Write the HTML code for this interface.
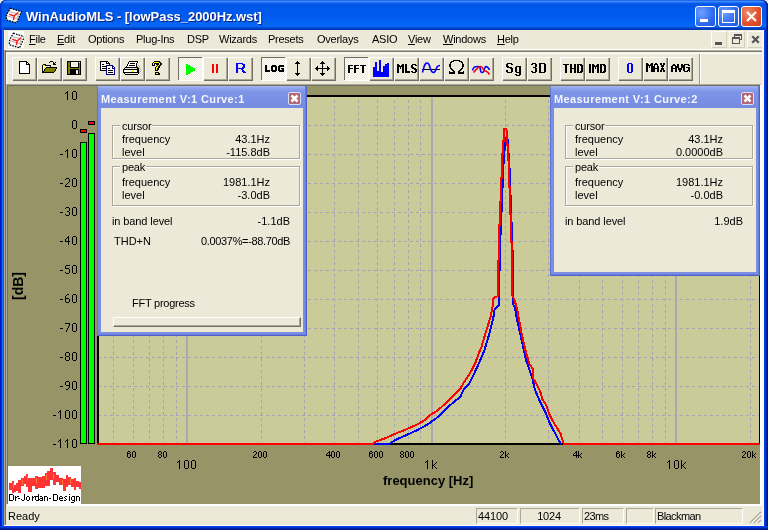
<!DOCTYPE html><html><head><meta charset="utf-8"><style>
*{box-sizing:border-box}
body{margin:0;width:768px;height:530px;overflow:hidden;position:relative;background:#F2ECD6;font-family:"Liberation Sans",sans-serif;font-size:11px;color:#000}
.a{position:absolute}
.t{position:absolute;white-space:nowrap;line-height:1;will-change:transform}
.btn{position:absolute;top:57px;width:24px;height:23px;background:#ECE9D8;border-top:1px solid #fff;border-left:1px solid #fff;box-shadow:inset -1px -1px 0 #ACA899, 1px 1px 0 #716F64}
.btn.p{background-color:#ECE9D8;background-image:linear-gradient(45deg,#fff 25%,transparent 25%,transparent 75%,#fff 75%),linear-gradient(45deg,#fff 25%,transparent 25%,transparent 75%,#fff 75%);background-size:2px 2px;background-position:0 0,1px 1px;border-top:1px solid #716F64;border-left:1px solid #716F64;box-shadow:1px 1px 0 #fff}
</style></head><body>
<div class="a" style="left:0;top:0;width:768px;height:30px;border-radius:6px 6px 0 0;box-shadow:inset 1px 0 0 #0030D0,inset -1px 0 0 #001A90,inset 2px 0 0 #0848E0,inset -2px 0 0 #0030C0;background:linear-gradient(#0845D0 0px,#3D8EFF 1px,#3888FF 2px,#0C5EF0 3px,#0054E6 5px,#0058EC 8px,#005AEE 16px,#0060F2 21px,#0868F8 25px,#0562F2 27px,#0042C4 28px,#0036B0 30px)"></div>
<div class="a" style="left:0;top:29px;width:4px;height:501px;background:linear-gradient(90deg,#0019CF 0px,#0019CF 1px,#0828D8 1px,#0828D8 2px,#1A6FF2 2px,#1A6FF2 3px,#0B5CEA 3px)"></div>
<div class="a" style="left:764px;top:29px;width:4px;height:501px;background:linear-gradient(90deg,#0042EE 0px,#0042EE 1px,#0032D4 1px,#0032D4 2px,#00229E 2px,#00229E 3px,#001888 3px)"></div>
<div class="a" style="left:0;top:526px;width:768px;height:4px;background:linear-gradient(#0042EE 0px,#0042EE 1px,#0032D4 1px,#0032D4 2px,#00229E 2px,#00229E 3px,#001888 3px)"></div>
<div class="a" style="left:4px;top:30px;width:760px;height:496px;background:#ECE9D8"></div>
<svg class="a" style="left:4px;top:5px" width="20" height="20" viewBox="0 0 20 20"><path d="M6.4 3.2 L17.4 6.8 L12.5 17.9 L2.3 14.7 L2.6 9.8 Z" fill="#fff" stroke="#000" stroke-width="1.3" stroke-dasharray="1.6 1.1"/><path d="M5 6.5 L14.5 9 M3.5 11 L12.5 13.5 M14.5 9 L12.5 13.5" stroke="#9A9A9A" stroke-width="0.8" fill="none"/><path d="M5.3 9.2 L10.2 10.9 L14.3 7.5 M10.2 10.9 L9.4 15.2" stroke="#FF2020" stroke-width="1.5" fill="none"/></svg>
<div class="t" style="left:26px;top:10px;font-weight:bold;font-size:13px;letter-spacing:-0.05px;color:#fff;text-shadow:1px 1px 0 #0A1E80">WinAudioMLS - [lowPass_2000Hz.wst]</div>
<div class="a" style="left:695px;top:6px;width:21px;height:21px;border-radius:3px;border:1px solid #fff;background:radial-gradient(circle at 30% 30%,#6FA0FF,#2F6BF0 60%,#1E55DA)"><div class="a" style="left:4px;top:12px;width:8px;height:3px;background:#fff"></div></div>
<div class="a" style="left:718px;top:6px;width:21px;height:21px;border-radius:3px;border:1px solid #fff;background:radial-gradient(circle at 30% 30%,#6FA0FF,#2F6BF0 60%,#1E55DA)"><div class="a" style="left:3px;top:3px;width:13px;height:13px;border:1px solid #fff;border-top-width:3px"></div></div>
<div class="a" style="left:741px;top:6px;width:21px;height:21px;border-radius:3px;border:1px solid #fff;background:radial-gradient(circle at 30% 30%,#F08A6A,#E0502A 60%,#C8401E)"><svg class="a" style="left:3px;top:3px" width="13" height="13"><path d="M2 2 L11 11 M11 2 L2 11" stroke="#fff" stroke-width="2.2"/></svg></div>
<svg class="a" style="left:8px;top:31px" width="16" height="17" viewBox="0 0 16 17"><rect width="16" height="17" fill="#fff"/><g transform="translate(-1,-1)"><path d="M6.4 3.2 L17.4 6.8 L12.5 17.9 L2.3 14.7 L2.6 9.8 Z" fill="#fff" stroke="#000" stroke-width="1.3" stroke-dasharray="1.6 1.1"/><path d="M5 6.5 L14.5 9 M3.5 11 L12.5 13.5 M14.5 9 L12.5 13.5" stroke="#9A9A9A" stroke-width="0.8" fill="none"/><path d="M5.3 9.2 L10.2 10.9 L14.3 7.5 M10.2 10.9 L9.4 15.2" stroke="#FF2020" stroke-width="1.5" fill="none"/></g></svg>
<div class="t" style="left:29px;top:34px;font-size:11px;letter-spacing:-0.25px"><u>F</u>ile</div>
<div class="t" style="left:57px;top:34px;font-size:11px;letter-spacing:-0.25px"><u>E</u>dit</div>
<div class="t" style="left:88px;top:34px;font-size:11px;letter-spacing:-0.25px">Options</div>
<div class="t" style="left:136px;top:34px;font-size:11px;letter-spacing:-0.25px">Plug-Ins</div>
<div class="t" style="left:187px;top:34px;font-size:11px;letter-spacing:-0.25px">DSP</div>
<div class="t" style="left:219px;top:34px;font-size:11px;letter-spacing:-0.25px">Wizards</div>
<div class="t" style="left:268px;top:34px;font-size:11px;letter-spacing:-0.25px">Presets</div>
<div class="t" style="left:317px;top:34px;font-size:11px;letter-spacing:-0.25px">Overlays</div>
<div class="t" style="left:372px;top:34px;font-size:11px;letter-spacing:-0.25px">ASIO</div>
<div class="t" style="left:408px;top:34px;font-size:11px;letter-spacing:-0.25px"><u>V</u>iew</div>
<div class="t" style="left:443px;top:34px;font-size:11px;letter-spacing:-0.25px"><u>W</u>indows</div>
<div class="t" style="left:497px;top:34px;font-size:11px;letter-spacing:-0.25px"><u>H</u>elp</div>
<div class="a" style="left:711px;top:31px;width:16px;height:17px;border-top:1px solid #fff;border-left:1px solid #fff;border-right:1px solid #D4D0BE;border-bottom:1px solid #D4D0BE;background:#EEEBDD"><div class="a" style="left:3px;top:10px;width:7px;height:3px;background:#555"></div></div>
<div class="a" style="left:729px;top:31px;width:16px;height:17px;border-top:1px solid #fff;border-left:1px solid #fff;border-right:1px solid #D4D0BE;border-bottom:1px solid #D4D0BE;background:#EEEBDD"></div>
<svg class="a" style="left:732px;top:34px" width="10" height="10" shape-rendering="crispEdges"><rect x="2" y="0" width="8" height="1" fill="#555"/><rect x="2" y="1" width="8" height="1" fill="#555"/><rect x="2" y="2" width="1" height="1" fill="#555"/><rect x="9" y="2" width="1" height="1" fill="#555"/><rect x="0" y="3" width="8" height="1" fill="#555"/><rect x="9" y="3" width="1" height="1" fill="#555"/><rect x="0" y="4" width="8" height="1" fill="#555"/><rect x="9" y="4" width="1" height="1" fill="#555"/><rect x="0" y="5" width="1" height="1" fill="#555"/><rect x="7" y="5" width="3" height="1" fill="#555"/><rect x="0" y="6" width="1" height="1" fill="#555"/><rect x="7" y="6" width="1" height="1" fill="#555"/><rect x="0" y="7" width="1" height="1" fill="#555"/><rect x="7" y="7" width="1" height="1" fill="#555"/><rect x="0" y="8" width="1" height="1" fill="#555"/><rect x="7" y="8" width="1" height="1" fill="#555"/><rect x="0" y="9" width="8" height="1" fill="#555"/></svg>
<div class="a" style="left:747px;top:31px;width:16px;height:17px;border-top:1px solid #fff;border-left:1px solid #fff;border-right:1px solid #D4D0BE;border-bottom:1px solid #D4D0BE;background:#EEEBDD"><svg class="a" style="left:3px;top:3px" width="9" height="10"><path d="M1.2 1.2 L7.8 7.8 M7.8 1.2 L1.2 7.8" stroke="#555" stroke-width="2.2"/></svg></div>
<div class="a" style="left:4px;top:49px;width:760px;height:1px;background:#FFFFFF"></div>
<div class="a" style="left:4px;top:50px;width:760px;height:1px;background:#B4B09E"></div>
<div class="a" style="left:4px;top:51px;width:760px;height:1px;background:#807E70"></div>
<div class="a" style="left:4px;top:52px;width:760px;height:1px;background:#F2F0E6"></div>
<div class="a" style="left:4px;top:53px;width:760px;height:1px;background:#FFFFFF"></div>
<div class="a" style="left:6px;top:53px;width:1px;height:31px;background:#fff"></div>
<div class="a" style="left:699px;top:54px;width:1px;height:30px;background:#9C9888"></div>
<div class="a" style="left:700px;top:54px;width:1px;height:30px;background:#fff"></div>
<div class="btn " style="left:12px"></div>
<div class="btn " style="left:37px"></div>
<div class="btn " style="left:62px"></div>
<div class="btn " style="left:95px"></div>
<div class="btn " style="left:120px"></div>
<div class="btn " style="left:145px"></div>
<div class="btn p" style="left:178px"></div>
<div class="btn " style="left:203px"></div>
<div class="btn " style="left:228px"></div>
<div class="btn p" style="left:261px"></div>
<div class="btn " style="left:286px"></div>
<div class="btn " style="left:311px"></div>
<div class="btn p" style="left:344px"></div>
<div class="btn " style="left:369px"></div>
<div class="btn " style="left:394px"></div>
<div class="btn " style="left:419px"></div>
<div class="btn " style="left:444px"></div>
<div class="btn " style="left:469px"></div>
<div class="btn " style="left:502px"></div>
<div class="btn " style="left:527px"></div>
<div class="btn " style="left:560px"></div>
<div class="btn " style="left:585px"></div>
<div class="btn " style="left:618px"></div>
<div class="btn " style="left:643px"></div>
<div class="btn " style="left:668px"></div>
<svg class="a" style="left:19px;top:61px" width="11" height="13" shape-rendering="crispEdges"><rect x="0" y="0" width="8" height="1" fill="#000"/><rect x="0" y="1" width="1" height="1" fill="#000"/><rect x="1" y="1" width="6" height="1" fill="#fff"/><rect x="7" y="1" width="2" height="1" fill="#000"/><rect x="0" y="2" width="1" height="1" fill="#000"/><rect x="1" y="2" width="6" height="1" fill="#fff"/><rect x="7" y="2" width="1" height="1" fill="#000"/><rect x="8" y="2" width="1" height="1" fill="#fff"/><rect x="9" y="2" width="1" height="1" fill="#000"/><rect x="0" y="3" width="1" height="1" fill="#000"/><rect x="1" y="3" width="6" height="1" fill="#fff"/><rect x="7" y="3" width="4" height="1" fill="#000"/><rect x="0" y="4" width="1" height="1" fill="#000"/><rect x="1" y="4" width="9" height="1" fill="#fff"/><rect x="10" y="4" width="1" height="1" fill="#000"/><rect x="0" y="5" width="1" height="1" fill="#000"/><rect x="1" y="5" width="9" height="1" fill="#fff"/><rect x="10" y="5" width="1" height="1" fill="#000"/><rect x="0" y="6" width="1" height="1" fill="#000"/><rect x="1" y="6" width="9" height="1" fill="#fff"/><rect x="10" y="6" width="1" height="1" fill="#000"/><rect x="0" y="7" width="1" height="1" fill="#000"/><rect x="1" y="7" width="9" height="1" fill="#fff"/><rect x="10" y="7" width="1" height="1" fill="#000"/><rect x="0" y="8" width="1" height="1" fill="#000"/><rect x="1" y="8" width="9" height="1" fill="#fff"/><rect x="10" y="8" width="1" height="1" fill="#000"/><rect x="0" y="9" width="1" height="1" fill="#000"/><rect x="1" y="9" width="9" height="1" fill="#fff"/><rect x="10" y="9" width="1" height="1" fill="#000"/><rect x="0" y="10" width="1" height="1" fill="#000"/><rect x="1" y="10" width="9" height="1" fill="#fff"/><rect x="10" y="10" width="1" height="1" fill="#000"/><rect x="0" y="11" width="1" height="1" fill="#000"/><rect x="1" y="11" width="9" height="1" fill="#fff"/><rect x="10" y="11" width="1" height="1" fill="#000"/><rect x="0" y="12" width="11" height="1" fill="#000"/></svg>
<svg class="a" style="left:42px;top:60px" width="15" height="13" shape-rendering="crispEdges"><rect x="8" y="1" width="3" height="1" fill="#000"/><rect x="7" y="2" width="1" height="1" fill="#000"/><rect x="11" y="2" width="1" height="1" fill="#000"/><rect x="13" y="2" width="1" height="1" fill="#000"/><rect x="11" y="3" width="2" height="1" fill="#000"/><rect x="1" y="4" width="3" height="1" fill="#000"/><rect x="11" y="4" width="3" height="1" fill="#000"/><rect x="0" y="5" width="1" height="1" fill="#000"/><rect x="1" y="5" width="1" height="1" fill="#fff"/><rect x="2" y="5" width="1" height="1" fill="#FFFF00"/><rect x="3" y="5" width="6" height="1" fill="#000"/><rect x="0" y="6" width="1" height="1" fill="#000"/><rect x="1" y="6" width="1" height="1" fill="#FFFF00"/><rect x="2" y="6" width="1" height="1" fill="#fff"/><rect x="3" y="6" width="1" height="1" fill="#FFFF00"/><rect x="4" y="6" width="1" height="1" fill="#fff"/><rect x="5" y="6" width="1" height="1" fill="#FFFF00"/><rect x="6" y="6" width="1" height="1" fill="#fff"/><rect x="7" y="6" width="1" height="1" fill="#FFFF00"/><rect x="8" y="6" width="1" height="1" fill="#000"/><rect x="0" y="7" width="1" height="1" fill="#000"/><rect x="1" y="7" width="1" height="1" fill="#fff"/><rect x="2" y="7" width="1" height="1" fill="#FFFF00"/><rect x="3" y="7" width="1" height="1" fill="#fff"/><rect x="4" y="7" width="11" height="1" fill="#000"/><rect x="0" y="8" width="1" height="1" fill="#000"/><rect x="1" y="8" width="1" height="1" fill="#FFFF00"/><rect x="2" y="8" width="1" height="1" fill="#fff"/><rect x="3" y="8" width="1" height="1" fill="#000"/><rect x="4" y="8" width="10" height="1" fill="#808000"/><rect x="14" y="8" width="1" height="1" fill="#000"/><rect x="0" y="9" width="1" height="1" fill="#000"/><rect x="1" y="9" width="1" height="1" fill="#fff"/><rect x="2" y="9" width="1" height="1" fill="#000"/><rect x="3" y="9" width="10" height="1" fill="#808000"/><rect x="13" y="9" width="1" height="1" fill="#000"/><rect x="0" y="10" width="1" height="1" fill="#000"/><rect x="1" y="10" width="1" height="1" fill="#FFFF00"/><rect x="2" y="10" width="1" height="1" fill="#000"/><rect x="3" y="10" width="10" height="1" fill="#808000"/><rect x="13" y="10" width="1" height="1" fill="#000"/><rect x="0" y="11" width="2" height="1" fill="#000"/><rect x="2" y="11" width="10" height="1" fill="#808000"/><rect x="12" y="11" width="1" height="1" fill="#000"/><rect x="0" y="12" width="12" height="1" fill="#000"/></svg>
<svg class="a" style="left:67px;top:61px" width="14" height="14" shape-rendering="crispEdges"><rect x="0" y="0" width="14" height="1" fill="#000"/><rect x="0" y="1" width="1" height="1" fill="#000"/><rect x="1" y="1" width="2" height="1" fill="#808000"/><rect x="3" y="1" width="1" height="1" fill="#000"/><rect x="4" y="1" width="7" height="1" fill="#fff"/><rect x="11" y="1" width="1" height="1" fill="#000"/><rect x="12" y="1" width="1" height="1" fill="#fff"/><rect x="13" y="1" width="1" height="1" fill="#000"/><rect x="0" y="2" width="1" height="1" fill="#000"/><rect x="1" y="2" width="2" height="1" fill="#808000"/><rect x="3" y="2" width="1" height="1" fill="#000"/><rect x="4" y="2" width="1" height="1" fill="#fff"/><rect x="5" y="2" width="5" height="1" fill="#ECE9D8"/><rect x="10" y="2" width="1" height="1" fill="#fff"/><rect x="11" y="2" width="1" height="1" fill="#000"/><rect x="12" y="2" width="1" height="1" fill="#808000"/><rect x="13" y="2" width="1" height="1" fill="#000"/><rect x="0" y="3" width="1" height="1" fill="#000"/><rect x="1" y="3" width="2" height="1" fill="#808000"/><rect x="3" y="3" width="1" height="1" fill="#000"/><rect x="4" y="3" width="1" height="1" fill="#fff"/><rect x="5" y="3" width="5" height="1" fill="#ECE9D8"/><rect x="10" y="3" width="1" height="1" fill="#fff"/><rect x="11" y="3" width="1" height="1" fill="#000"/><rect x="12" y="3" width="1" height="1" fill="#808000"/><rect x="13" y="3" width="1" height="1" fill="#000"/><rect x="0" y="4" width="1" height="1" fill="#000"/><rect x="1" y="4" width="2" height="1" fill="#808000"/><rect x="3" y="4" width="1" height="1" fill="#000"/><rect x="4" y="4" width="1" height="1" fill="#fff"/><rect x="5" y="4" width="5" height="1" fill="#ECE9D8"/><rect x="10" y="4" width="1" height="1" fill="#fff"/><rect x="11" y="4" width="1" height="1" fill="#000"/><rect x="12" y="4" width="1" height="1" fill="#808000"/><rect x="13" y="4" width="1" height="1" fill="#000"/><rect x="0" y="5" width="1" height="1" fill="#000"/><rect x="1" y="5" width="2" height="1" fill="#808000"/><rect x="3" y="5" width="1" height="1" fill="#000"/><rect x="4" y="5" width="7" height="1" fill="#fff"/><rect x="11" y="5" width="1" height="1" fill="#000"/><rect x="12" y="5" width="1" height="1" fill="#808000"/><rect x="13" y="5" width="1" height="1" fill="#000"/><rect x="0" y="6" width="1" height="1" fill="#000"/><rect x="1" y="6" width="2" height="1" fill="#808000"/><rect x="3" y="6" width="9" height="1" fill="#000"/><rect x="12" y="6" width="1" height="1" fill="#808000"/><rect x="13" y="6" width="1" height="1" fill="#000"/><rect x="0" y="7" width="1" height="1" fill="#000"/><rect x="1" y="7" width="12" height="1" fill="#808000"/><rect x="13" y="7" width="1" height="1" fill="#000"/><rect x="0" y="8" width="1" height="1" fill="#000"/><rect x="1" y="8" width="2" height="1" fill="#808000"/><rect x="3" y="8" width="9" height="1" fill="#000"/><rect x="12" y="8" width="1" height="1" fill="#808000"/><rect x="13" y="8" width="1" height="1" fill="#000"/><rect x="0" y="9" width="1" height="1" fill="#000"/><rect x="1" y="9" width="2" height="1" fill="#808000"/><rect x="3" y="9" width="6" height="1" fill="#000"/><rect x="9" y="9" width="2" height="1" fill="#ECE9D8"/><rect x="11" y="9" width="1" height="1" fill="#000"/><rect x="12" y="9" width="1" height="1" fill="#808000"/><rect x="13" y="9" width="1" height="1" fill="#000"/><rect x="0" y="10" width="1" height="1" fill="#000"/><rect x="1" y="10" width="2" height="1" fill="#808000"/><rect x="3" y="10" width="6" height="1" fill="#000"/><rect x="9" y="10" width="2" height="1" fill="#ECE9D8"/><rect x="11" y="10" width="1" height="1" fill="#000"/><rect x="12" y="10" width="1" height="1" fill="#808000"/><rect x="13" y="10" width="1" height="1" fill="#000"/><rect x="0" y="11" width="1" height="1" fill="#000"/><rect x="1" y="11" width="2" height="1" fill="#808000"/><rect x="3" y="11" width="6" height="1" fill="#000"/><rect x="9" y="11" width="2" height="1" fill="#ECE9D8"/><rect x="11" y="11" width="1" height="1" fill="#000"/><rect x="12" y="11" width="1" height="1" fill="#808000"/><rect x="13" y="11" width="1" height="1" fill="#000"/><rect x="0" y="12" width="1" height="1" fill="#000"/><rect x="1" y="12" width="2" height="1" fill="#808000"/><rect x="3" y="12" width="6" height="1" fill="#000"/><rect x="9" y="12" width="2" height="1" fill="#ECE9D8"/><rect x="11" y="12" width="1" height="1" fill="#000"/><rect x="12" y="12" width="1" height="1" fill="#808000"/><rect x="13" y="12" width="1" height="1" fill="#000"/><rect x="0" y="13" width="14" height="1" fill="#000"/></svg>
<svg class="a" style="left:100px;top:61px" width="15" height="14" shape-rendering="crispEdges"><rect x="0" y="0" width="8" height="1" fill="#000"/><rect x="0" y="1" width="1" height="1" fill="#000"/><rect x="1" y="1" width="5" height="1" fill="#fff"/><rect x="6" y="1" width="1" height="1" fill="#000"/><rect x="7" y="1" width="1" height="1" fill="#fff"/><rect x="8" y="1" width="1" height="1" fill="#000"/><rect x="0" y="2" width="1" height="1" fill="#000"/><rect x="1" y="2" width="5" height="1" fill="#fff"/><rect x="6" y="2" width="4" height="1" fill="#000"/><rect x="0" y="3" width="1" height="1" fill="#000"/><rect x="1" y="3" width="1" height="1" fill="#fff"/><rect x="2" y="3" width="2" height="1" fill="#000"/><rect x="4" y="3" width="5" height="1" fill="#fff"/><rect x="9" y="3" width="1" height="1" fill="#000"/><rect x="0" y="4" width="1" height="1" fill="#000"/><rect x="1" y="4" width="5" height="1" fill="#fff"/><rect x="6" y="4" width="7" height="1" fill="#000080"/><rect x="0" y="5" width="1" height="1" fill="#000"/><rect x="1" y="5" width="1" height="1" fill="#fff"/><rect x="2" y="5" width="5" height="1" fill="#000"/><rect x="7" y="5" width="5" height="1" fill="#fff"/><rect x="12" y="5" width="2" height="1" fill="#000080"/><rect x="0" y="6" width="1" height="1" fill="#000"/><rect x="1" y="6" width="5" height="1" fill="#fff"/><rect x="6" y="6" width="1" height="1" fill="#000080"/><rect x="7" y="6" width="5" height="1" fill="#fff"/><rect x="12" y="6" width="1" height="1" fill="#000080"/><rect x="13" y="6" width="1" height="1" fill="#fff"/><rect x="14" y="6" width="1" height="1" fill="#000080"/><rect x="0" y="7" width="1" height="1" fill="#000"/><rect x="1" y="7" width="1" height="1" fill="#fff"/><rect x="2" y="7" width="5" height="1" fill="#000"/><rect x="7" y="7" width="1" height="1" fill="#fff"/><rect x="8" y="7" width="2" height="1" fill="#000"/><rect x="10" y="7" width="2" height="1" fill="#fff"/><rect x="12" y="7" width="3" height="1" fill="#000080"/><rect x="0" y="8" width="1" height="1" fill="#000"/><rect x="1" y="8" width="5" height="1" fill="#fff"/><rect x="6" y="8" width="1" height="1" fill="#000080"/><rect x="7" y="8" width="7" height="1" fill="#fff"/><rect x="14" y="8" width="1" height="1" fill="#000080"/><rect x="0" y="9" width="6" height="1" fill="#000"/><rect x="6" y="9" width="1" height="1" fill="#000080"/><rect x="7" y="9" width="1" height="1" fill="#fff"/><rect x="8" y="9" width="5" height="1" fill="#000"/><rect x="13" y="9" width="1" height="1" fill="#fff"/><rect x="14" y="9" width="1" height="1" fill="#000080"/><rect x="6" y="10" width="1" height="1" fill="#000080"/><rect x="7" y="10" width="7" height="1" fill="#fff"/><rect x="14" y="10" width="1" height="1" fill="#000080"/><rect x="6" y="11" width="1" height="1" fill="#000080"/><rect x="7" y="11" width="1" height="1" fill="#fff"/><rect x="8" y="11" width="5" height="1" fill="#000"/><rect x="13" y="11" width="1" height="1" fill="#fff"/><rect x="14" y="11" width="1" height="1" fill="#000080"/><rect x="6" y="12" width="1" height="1" fill="#000080"/><rect x="7" y="12" width="7" height="1" fill="#fff"/><rect x="14" y="12" width="1" height="1" fill="#000080"/><rect x="6" y="13" width="9" height="1" fill="#000080"/></svg>
<svg class="a" style="left:123px;top:61px" width="18" height="14" shape-rendering="crispEdges"><rect x="6" y="0" width="9" height="1" fill="#000"/><rect x="5" y="1" width="1" height="1" fill="#000"/><rect x="6" y="1" width="8" height="1" fill="#fff"/><rect x="14" y="1" width="1" height="1" fill="#000"/><rect x="5" y="2" width="1" height="1" fill="#000"/><rect x="6" y="2" width="1" height="1" fill="#fff"/><rect x="7" y="2" width="5" height="1" fill="#000"/><rect x="12" y="2" width="1" height="1" fill="#fff"/><rect x="13" y="2" width="1" height="1" fill="#000"/><rect x="4" y="3" width="1" height="1" fill="#000"/><rect x="5" y="3" width="8" height="1" fill="#fff"/><rect x="13" y="3" width="1" height="1" fill="#000"/><rect x="4" y="4" width="1" height="1" fill="#000"/><rect x="5" y="4" width="1" height="1" fill="#fff"/><rect x="6" y="4" width="6" height="1" fill="#000"/><rect x="12" y="4" width="1" height="1" fill="#fff"/><rect x="13" y="4" width="1" height="1" fill="#000"/><rect x="15" y="4" width="1" height="1" fill="#ACA899"/><rect x="3" y="5" width="1" height="1" fill="#000"/><rect x="4" y="5" width="9" height="1" fill="#fff"/><rect x="13" y="5" width="1" height="1" fill="#000"/><rect x="14" y="5" width="1" height="1" fill="#ACA899"/><rect x="16" y="5" width="1" height="1" fill="#ACA899"/><rect x="2" y="6" width="13" height="1" fill="#000"/><rect x="15" y="6" width="1" height="1" fill="#ACA899"/><rect x="1" y="7" width="1" height="1" fill="#000"/><rect x="2" y="7" width="12" height="1" fill="#ECE9D8"/><rect x="14" y="7" width="2" height="1" fill="#000"/><rect x="16" y="7" width="1" height="1" fill="#ACA899"/><rect x="0" y="8" width="16" height="1" fill="#000"/><rect x="17" y="8" width="1" height="1" fill="#ACA899"/><rect x="0" y="9" width="1" height="1" fill="#000"/><rect x="1" y="9" width="7" height="1" fill="#fff"/><rect x="8" y="9" width="3" height="1" fill="#FFFF00"/><rect x="11" y="9" width="3" height="1" fill="#fff"/><rect x="14" y="9" width="2" height="1" fill="#000"/><rect x="16" y="9" width="1" height="1" fill="#ACA899"/><rect x="0" y="10" width="1" height="1" fill="#000"/><rect x="1" y="10" width="7" height="1" fill="#fff"/><rect x="8" y="10" width="3" height="1" fill="#FFFF00"/><rect x="11" y="10" width="3" height="1" fill="#fff"/><rect x="14" y="10" width="2" height="1" fill="#000"/><rect x="17" y="10" width="1" height="1" fill="#ACA899"/><rect x="0" y="11" width="16" height="1" fill="#000"/><rect x="16" y="11" width="1" height="1" fill="#ACA899"/><rect x="1" y="12" width="1" height="1" fill="#000"/><rect x="2" y="12" width="13" height="1" fill="#ECE9D8"/><rect x="15" y="12" width="1" height="1" fill="#000"/><rect x="2" y="13" width="13" height="1" fill="#000"/></svg>
<svg class="a" style="left:151px;top:61px" width="11" height="14" shape-rendering="crispEdges"><rect x="3" y="0" width="6" height="1" fill="#000"/><rect x="2" y="1" width="1" height="1" fill="#000"/><rect x="3" y="1" width="5" height="1" fill="#FFFF00"/><rect x="8" y="1" width="2" height="1" fill="#000"/><rect x="1" y="2" width="1" height="1" fill="#000"/><rect x="2" y="2" width="1" height="1" fill="#FFFF00"/><rect x="3" y="2" width="5" height="1" fill="#000"/><rect x="8" y="2" width="1" height="1" fill="#FFFF00"/><rect x="9" y="2" width="2" height="1" fill="#000"/><rect x="1" y="3" width="1" height="1" fill="#000"/><rect x="2" y="3" width="1" height="1" fill="#FFFF00"/><rect x="3" y="3" width="1" height="1" fill="#000"/><rect x="5" y="3" width="3" height="1" fill="#000"/><rect x="8" y="3" width="1" height="1" fill="#FFFF00"/><rect x="9" y="3" width="2" height="1" fill="#000"/><rect x="1" y="4" width="3" height="1" fill="#000"/><rect x="6" y="4" width="1" height="1" fill="#000"/><rect x="7" y="4" width="1" height="1" fill="#FFFF00"/><rect x="8" y="4" width="2" height="1" fill="#000"/><rect x="5" y="5" width="1" height="1" fill="#000"/><rect x="6" y="5" width="1" height="1" fill="#FFFF00"/><rect x="7" y="5" width="2" height="1" fill="#000"/><rect x="4" y="6" width="1" height="1" fill="#000"/><rect x="5" y="6" width="2" height="1" fill="#FFFF00"/><rect x="7" y="6" width="2" height="1" fill="#000"/><rect x="4" y="7" width="1" height="1" fill="#000"/><rect x="5" y="7" width="1" height="1" fill="#FFFF00"/><rect x="6" y="7" width="2" height="1" fill="#000"/><rect x="4" y="8" width="1" height="1" fill="#000"/><rect x="5" y="8" width="1" height="1" fill="#FFFF00"/><rect x="6" y="8" width="2" height="1" fill="#000"/><rect x="4" y="9" width="3" height="1" fill="#000"/><rect x="4" y="11" width="4" height="1" fill="#000"/><rect x="4" y="12" width="1" height="1" fill="#000"/><rect x="5" y="12" width="2" height="1" fill="#FFFF00"/><rect x="7" y="12" width="2" height="1" fill="#000"/><rect x="4" y="13" width="5" height="1" fill="#000"/></svg>
<svg class="a" style="left:186px;top:64px" width="9" height="11" shape-rendering="crispEdges"><rect x="0" y="0" width="2" height="1" fill="#00FF00"/><rect x="0" y="1" width="4" height="1" fill="#00FF00"/><rect x="0" y="2" width="5" height="1" fill="#00FF00"/><rect x="0" y="3" width="7" height="1" fill="#00FF00"/><rect x="0" y="4" width="9" height="1" fill="#00FF00"/><rect x="0" y="5" width="9" height="1" fill="#00FF00"/><rect x="0" y="6" width="9" height="1" fill="#00FF00"/><rect x="0" y="7" width="7" height="1" fill="#00FF00"/><rect x="0" y="8" width="5" height="1" fill="#00FF00"/><rect x="0" y="9" width="4" height="1" fill="#00FF00"/><rect x="0" y="10" width="2" height="1" fill="#00FF00"/></svg>
<svg class="a" style="left:212px;top:64px" width="6" height="9" shape-rendering="crispEdges"><rect x="0" y="0" width="2" height="1" fill="#FF0000"/><rect x="4" y="0" width="2" height="1" fill="#FF0000"/><rect x="0" y="1" width="2" height="1" fill="#FF0000"/><rect x="4" y="1" width="2" height="1" fill="#FF0000"/><rect x="0" y="2" width="2" height="1" fill="#FF0000"/><rect x="4" y="2" width="2" height="1" fill="#FF0000"/><rect x="0" y="3" width="2" height="1" fill="#FF0000"/><rect x="4" y="3" width="2" height="1" fill="#FF0000"/><rect x="0" y="4" width="2" height="1" fill="#FF0000"/><rect x="4" y="4" width="2" height="1" fill="#FF0000"/><rect x="0" y="5" width="2" height="1" fill="#FF0000"/><rect x="4" y="5" width="2" height="1" fill="#FF0000"/><rect x="0" y="6" width="2" height="1" fill="#FF0000"/><rect x="4" y="6" width="2" height="1" fill="#FF0000"/><rect x="0" y="7" width="2" height="1" fill="#FF0000"/><rect x="4" y="7" width="2" height="1" fill="#FF0000"/><rect x="0" y="8" width="2" height="1" fill="#FF0000"/><rect x="4" y="8" width="2" height="1" fill="#FF0000"/></svg>
<svg class="a" style="left:236px;top:63px" width="10" height="10" shape-rendering="crispEdges"><rect x="0" y="0" width="7" height="1" fill="#0000FF"/><rect x="0" y="1" width="2" height="1" fill="#0000FF"/><rect x="6" y="1" width="3" height="1" fill="#0000FF"/><rect x="0" y="2" width="2" height="1" fill="#0000FF"/><rect x="7" y="2" width="2" height="1" fill="#0000FF"/><rect x="0" y="3" width="2" height="1" fill="#0000FF"/><rect x="7" y="3" width="2" height="1" fill="#0000FF"/><rect x="0" y="4" width="2" height="1" fill="#0000FF"/><rect x="6" y="4" width="3" height="1" fill="#0000FF"/><rect x="0" y="5" width="8" height="1" fill="#0000FF"/><rect x="0" y="6" width="2" height="1" fill="#0000FF"/><rect x="5" y="6" width="2" height="1" fill="#0000FF"/><rect x="0" y="7" width="2" height="1" fill="#0000FF"/><rect x="6" y="7" width="2" height="1" fill="#0000FF"/><rect x="0" y="8" width="2" height="1" fill="#0000FF"/><rect x="6" y="8" width="3" height="1" fill="#0000FF"/><rect x="0" y="9" width="2" height="1" fill="#0000FF"/><rect x="7" y="9" width="3" height="1" fill="#0000FF"/></svg>
<svg class="a" style="left:265px;top:65px" width="19" height="7" shape-rendering="crispEdges"><rect x="0" y="0" width="2" height="1" fill="#000"/><rect x="7" y="0" width="4" height="1" fill="#000"/><rect x="14" y="0" width="5" height="1" fill="#000"/><rect x="0" y="1" width="2" height="1" fill="#000"/><rect x="6" y="1" width="6" height="1" fill="#000"/><rect x="13" y="1" width="6" height="1" fill="#000"/><rect x="0" y="2" width="2" height="1" fill="#000"/><rect x="6" y="2" width="2" height="1" fill="#000"/><rect x="10" y="2" width="2" height="1" fill="#000"/><rect x="13" y="2" width="2" height="1" fill="#000"/><rect x="0" y="3" width="2" height="1" fill="#000"/><rect x="6" y="3" width="2" height="1" fill="#000"/><rect x="10" y="3" width="2" height="1" fill="#000"/><rect x="13" y="3" width="2" height="1" fill="#000"/><rect x="16" y="3" width="3" height="1" fill="#000"/><rect x="0" y="4" width="2" height="1" fill="#000"/><rect x="6" y="4" width="2" height="1" fill="#000"/><rect x="10" y="4" width="2" height="1" fill="#000"/><rect x="13" y="4" width="2" height="1" fill="#000"/><rect x="17" y="4" width="2" height="1" fill="#000"/><rect x="0" y="5" width="5" height="1" fill="#000"/><rect x="6" y="5" width="6" height="1" fill="#000"/><rect x="13" y="5" width="6" height="1" fill="#000"/><rect x="0" y="6" width="5" height="1" fill="#000"/><rect x="7" y="6" width="4" height="1" fill="#000"/><rect x="14" y="6" width="5" height="1" fill="#000"/></svg>
<svg class="a" style="left:295px;top:61px" width="5" height="15" shape-rendering="crispEdges"><rect x="2" y="0" width="1" height="1" fill="#000"/><rect x="1" y="1" width="3" height="1" fill="#000"/><rect x="0" y="2" width="5" height="1" fill="#000"/><rect x="2" y="3" width="1" height="1" fill="#000"/><rect x="2" y="4" width="1" height="1" fill="#000"/><rect x="2" y="5" width="1" height="1" fill="#000"/><rect x="2" y="6" width="1" height="1" fill="#000"/><rect x="2" y="7" width="1" height="1" fill="#000"/><rect x="2" y="8" width="1" height="1" fill="#000"/><rect x="2" y="9" width="1" height="1" fill="#000"/><rect x="2" y="10" width="1" height="1" fill="#000"/><rect x="2" y="11" width="1" height="1" fill="#000"/><rect x="0" y="12" width="5" height="1" fill="#000"/><rect x="1" y="13" width="3" height="1" fill="#000"/><rect x="2" y="14" width="1" height="1" fill="#000"/></svg>
<svg class="a" style="left:314px;top:61px" width="17" height="15" shape-rendering="crispEdges"><rect x="8" y="0" width="1" height="1" fill="#000"/><rect x="7" y="1" width="3" height="1" fill="#000"/><rect x="6" y="2" width="5" height="1" fill="#000"/><rect x="8" y="3" width="1" height="1" fill="#000"/><rect x="8" y="4" width="1" height="1" fill="#000"/><rect x="3" y="5" width="1" height="1" fill="#000"/><rect x="8" y="5" width="1" height="1" fill="#000"/><rect x="13" y="5" width="1" height="1" fill="#000"/><rect x="2" y="6" width="2" height="1" fill="#000"/><rect x="8" y="6" width="1" height="1" fill="#000"/><rect x="13" y="6" width="2" height="1" fill="#000"/><rect x="1" y="7" width="15" height="1" fill="#000"/><rect x="2" y="8" width="2" height="1" fill="#000"/><rect x="8" y="8" width="1" height="1" fill="#000"/><rect x="13" y="8" width="2" height="1" fill="#000"/><rect x="3" y="9" width="1" height="1" fill="#000"/><rect x="8" y="9" width="1" height="1" fill="#000"/><rect x="13" y="9" width="1" height="1" fill="#000"/><rect x="8" y="10" width="1" height="1" fill="#000"/><rect x="8" y="11" width="1" height="1" fill="#000"/><rect x="6" y="12" width="5" height="1" fill="#000"/><rect x="7" y="13" width="3" height="1" fill="#000"/><rect x="8" y="14" width="1" height="1" fill="#000"/></svg>
<svg class="a" style="left:348px;top:65px" width="18" height="8" shape-rendering="crispEdges"><rect x="0" y="0" width="5" height="1" fill="#000"/><rect x="6" y="0" width="5" height="1" fill="#000"/><rect x="12" y="0" width="6" height="1" fill="#000"/><rect x="0" y="1" width="2" height="1" fill="#000"/><rect x="6" y="1" width="2" height="1" fill="#000"/><rect x="14" y="1" width="2" height="1" fill="#000"/><rect x="0" y="2" width="2" height="1" fill="#000"/><rect x="6" y="2" width="2" height="1" fill="#000"/><rect x="14" y="2" width="2" height="1" fill="#000"/><rect x="0" y="3" width="5" height="1" fill="#000"/><rect x="6" y="3" width="5" height="1" fill="#000"/><rect x="14" y="3" width="2" height="1" fill="#000"/><rect x="0" y="4" width="2" height="1" fill="#000"/><rect x="6" y="4" width="2" height="1" fill="#000"/><rect x="14" y="4" width="2" height="1" fill="#000"/><rect x="0" y="5" width="2" height="1" fill="#000"/><rect x="6" y="5" width="2" height="1" fill="#000"/><rect x="14" y="5" width="2" height="1" fill="#000"/><rect x="0" y="6" width="2" height="1" fill="#000"/><rect x="6" y="6" width="2" height="1" fill="#000"/><rect x="14" y="6" width="2" height="1" fill="#000"/><rect x="0" y="7" width="2" height="1" fill="#000"/><rect x="6" y="7" width="2" height="1" fill="#000"/><rect x="14" y="7" width="2" height="1" fill="#000"/></svg>
<svg class="a" style="left:373px;top:60px" width="16" height="17" shape-rendering="crispEdges"><rect x="6" y="0" width="2" height="1" fill="#0000FF"/><rect x="6" y="1" width="2" height="1" fill="#0000FF"/><rect x="2" y="2" width="2" height="1" fill="#0000FF"/><rect x="6" y="2" width="2" height="1" fill="#0000FF"/><rect x="2" y="3" width="2" height="1" fill="#0000FF"/><rect x="6" y="3" width="2" height="1" fill="#0000FF"/><rect x="14" y="3" width="2" height="1" fill="#0000FF"/><rect x="2" y="4" width="2" height="1" fill="#0000FF"/><rect x="6" y="4" width="2" height="1" fill="#0000FF"/><rect x="12" y="4" width="4" height="1" fill="#0000FF"/><rect x="2" y="5" width="2" height="1" fill="#0000FF"/><rect x="6" y="5" width="2" height="1" fill="#0000FF"/><rect x="12" y="5" width="4" height="1" fill="#0000FF"/><rect x="2" y="6" width="2" height="1" fill="#0000FF"/><rect x="6" y="6" width="2" height="1" fill="#0000FF"/><rect x="10" y="6" width="6" height="1" fill="#0000FF"/><rect x="0" y="7" width="4" height="1" fill="#0000FF"/><rect x="6" y="7" width="2" height="1" fill="#0000FF"/><rect x="10" y="7" width="6" height="1" fill="#0000FF"/><rect x="0" y="8" width="4" height="1" fill="#0000FF"/><rect x="6" y="8" width="2" height="1" fill="#0000FF"/><rect x="10" y="8" width="6" height="1" fill="#0000FF"/><rect x="0" y="9" width="4" height="1" fill="#0000FF"/><rect x="6" y="9" width="2" height="1" fill="#0000FF"/><rect x="10" y="9" width="6" height="1" fill="#0000FF"/><rect x="0" y="10" width="4" height="1" fill="#0000FF"/><rect x="6" y="10" width="2" height="1" fill="#0000FF"/><rect x="10" y="10" width="6" height="1" fill="#0000FF"/><rect x="0" y="11" width="8" height="1" fill="#0000FF"/><rect x="10" y="11" width="6" height="1" fill="#0000FF"/><rect x="0" y="12" width="16" height="1" fill="#0000FF"/><rect x="0" y="13" width="16" height="1" fill="#0000FF"/><rect x="0" y="14" width="16" height="1" fill="#0000FF"/><rect x="0" y="15" width="16" height="1" fill="#0000FF"/><rect x="0" y="16" width="16" height="1" fill="#0000FF"/></svg>
<svg class="a" style="left:397px;top:64px" width="20" height="9" shape-rendering="crispEdges"><rect x="0" y="0" width="2" height="1" fill="#000"/><rect x="5" y="0" width="2" height="1" fill="#000"/><rect x="8" y="0" width="2" height="1" fill="#000"/><rect x="15" y="0" width="4" height="1" fill="#000"/><rect x="0" y="1" width="3" height="1" fill="#000"/><rect x="4" y="1" width="3" height="1" fill="#000"/><rect x="8" y="1" width="2" height="1" fill="#000"/><rect x="14" y="1" width="2" height="1" fill="#000"/><rect x="18" y="1" width="2" height="1" fill="#000"/><rect x="0" y="2" width="7" height="1" fill="#000"/><rect x="8" y="2" width="2" height="1" fill="#000"/><rect x="14" y="2" width="2" height="1" fill="#000"/><rect x="0" y="3" width="2" height="1" fill="#000"/><rect x="3" y="3" width="1" height="1" fill="#000"/><rect x="5" y="3" width="2" height="1" fill="#000"/><rect x="8" y="3" width="2" height="1" fill="#000"/><rect x="14" y="3" width="3" height="1" fill="#000"/><rect x="0" y="4" width="2" height="1" fill="#000"/><rect x="3" y="4" width="1" height="1" fill="#000"/><rect x="5" y="4" width="2" height="1" fill="#000"/><rect x="8" y="4" width="2" height="1" fill="#000"/><rect x="15" y="4" width="4" height="1" fill="#000"/><rect x="0" y="5" width="2" height="1" fill="#000"/><rect x="5" y="5" width="2" height="1" fill="#000"/><rect x="8" y="5" width="2" height="1" fill="#000"/><rect x="17" y="5" width="3" height="1" fill="#000"/><rect x="0" y="6" width="2" height="1" fill="#000"/><rect x="5" y="6" width="2" height="1" fill="#000"/><rect x="8" y="6" width="2" height="1" fill="#000"/><rect x="18" y="6" width="2" height="1" fill="#000"/><rect x="0" y="7" width="2" height="1" fill="#000"/><rect x="5" y="7" width="2" height="1" fill="#000"/><rect x="8" y="7" width="5" height="1" fill="#000"/><rect x="14" y="7" width="2" height="1" fill="#000"/><rect x="18" y="7" width="2" height="1" fill="#000"/><rect x="0" y="8" width="2" height="1" fill="#000"/><rect x="5" y="8" width="2" height="1" fill="#000"/><rect x="8" y="8" width="5" height="1" fill="#000"/><rect x="15" y="8" width="4" height="1" fill="#000"/></svg>
<svg class="a" style="left:421px;top:62px" width="20" height="12"><path d="M1 9 H19" stroke="#000" stroke-width="1" transform="translate(0,-1.5)"/><path d="M1.5 10.5 C3 5 3.5 1 6 1 C8.5 1 8.5 4 9.5 7 C10.5 10 11 10.5 12.5 10.5 C14.5 10.5 15 7 16 5 C17 3.5 18 3.5 19 3.5" fill="none" stroke="#0000FF" stroke-width="1.6"/></svg>
<svg class="a" style="left:449px;top:60px" width="15" height="14" shape-rendering="crispEdges"><rect x="4" y="0" width="7" height="1" fill="#000"/><rect x="2" y="1" width="3" height="1" fill="#000"/><rect x="10" y="1" width="3" height="1" fill="#000"/><rect x="1" y="2" width="2" height="1" fill="#000"/><rect x="12" y="2" width="2" height="1" fill="#000"/><rect x="1" y="3" width="1" height="1" fill="#000"/><rect x="13" y="3" width="1" height="1" fill="#000"/><rect x="0" y="4" width="2" height="1" fill="#000"/><rect x="13" y="4" width="2" height="1" fill="#000"/><rect x="0" y="5" width="2" height="1" fill="#000"/><rect x="13" y="5" width="2" height="1" fill="#000"/><rect x="0" y="6" width="2" height="1" fill="#000"/><rect x="13" y="6" width="2" height="1" fill="#000"/><rect x="1" y="7" width="1" height="1" fill="#000"/><rect x="13" y="7" width="1" height="1" fill="#000"/><rect x="1" y="8" width="2" height="1" fill="#000"/><rect x="12" y="8" width="2" height="1" fill="#000"/><rect x="2" y="9" width="2" height="1" fill="#000"/><rect x="11" y="9" width="2" height="1" fill="#000"/><rect x="3" y="10" width="2" height="1" fill="#000"/><rect x="10" y="10" width="2" height="1" fill="#000"/><rect x="0" y="11" width="1" height="1" fill="#000"/><rect x="4" y="11" width="2" height="1" fill="#000"/><rect x="9" y="11" width="2" height="1" fill="#000"/><rect x="14" y="11" width="1" height="1" fill="#000"/><rect x="0" y="12" width="6" height="1" fill="#000"/><rect x="9" y="12" width="6" height="1" fill="#000"/><rect x="0" y="13" width="6" height="1" fill="#000"/><rect x="9" y="13" width="6" height="1" fill="#000"/></svg>
<svg class="a" style="left:471px;top:65px" width="20" height="11"><path d="M1.5 5.5 C2.5 2 3.5 1.5 7 1.5 C9 1.5 9.5 2.5 9.5 5 C9.5 7.5 10 7.5 11.5 7.5 C13.5 7.5 13 2 15 1.5 C17 1.5 18 4 18.5 5" fill="none" stroke="#0000FF" stroke-width="1.6"/><path d="M2.5 7.5 C5 6 6 1.5 9.5 1.5 C12.5 1.5 12 6 14 6 C16 6 17 7 18.5 9.5" fill="none" stroke="#FF0000" stroke-width="1.6"/></svg>
<svg class="a" style="left:506px;top:63px" width="7" height="10" shape-rendering="crispEdges"><rect x="1" y="0" width="5" height="1" fill="#000"/><rect x="0" y="1" width="2" height="1" fill="#000"/><rect x="5" y="1" width="2" height="1" fill="#000"/><rect x="0" y="2" width="2" height="1" fill="#000"/><rect x="0" y="3" width="3" height="1" fill="#000"/><rect x="1" y="4" width="5" height="1" fill="#000"/><rect x="4" y="5" width="3" height="1" fill="#000"/><rect x="5" y="6" width="2" height="1" fill="#000"/><rect x="0" y="7" width="2" height="1" fill="#000"/><rect x="5" y="7" width="2" height="1" fill="#000"/><rect x="0" y="8" width="2" height="1" fill="#000"/><rect x="5" y="8" width="2" height="1" fill="#000"/><rect x="1" y="9" width="5" height="1" fill="#000"/></svg>
<svg class="a" style="left:515px;top:66px" width="6" height="10" shape-rendering="crispEdges"><rect x="1" y="0" width="5" height="1" fill="#000"/><rect x="0" y="1" width="2" height="1" fill="#000"/><rect x="4" y="1" width="2" height="1" fill="#000"/><rect x="0" y="2" width="2" height="1" fill="#000"/><rect x="4" y="2" width="2" height="1" fill="#000"/><rect x="0" y="3" width="2" height="1" fill="#000"/><rect x="4" y="3" width="2" height="1" fill="#000"/><rect x="0" y="4" width="2" height="1" fill="#000"/><rect x="4" y="4" width="2" height="1" fill="#000"/><rect x="0" y="5" width="2" height="1" fill="#000"/><rect x="4" y="5" width="2" height="1" fill="#000"/><rect x="1" y="6" width="5" height="1" fill="#000"/><rect x="4" y="7" width="2" height="1" fill="#000"/><rect x="0" y="8" width="2" height="1" fill="#000"/><rect x="4" y="8" width="2" height="1" fill="#000"/><rect x="1" y="9" width="4" height="1" fill="#000"/></svg>
<svg class="a" style="left:531px;top:63px" width="15" height="10" shape-rendering="crispEdges"><rect x="1" y="0" width="4" height="1" fill="#000"/><rect x="8" y="0" width="6" height="1" fill="#000"/><rect x="0" y="1" width="2" height="1" fill="#000"/><rect x="4" y="1" width="2" height="1" fill="#000"/><rect x="8" y="1" width="2" height="1" fill="#000"/><rect x="13" y="1" width="2" height="1" fill="#000"/><rect x="4" y="2" width="2" height="1" fill="#000"/><rect x="8" y="2" width="2" height="1" fill="#000"/><rect x="13" y="2" width="2" height="1" fill="#000"/><rect x="4" y="3" width="2" height="1" fill="#000"/><rect x="8" y="3" width="2" height="1" fill="#000"/><rect x="13" y="3" width="2" height="1" fill="#000"/><rect x="2" y="4" width="3" height="1" fill="#000"/><rect x="8" y="4" width="2" height="1" fill="#000"/><rect x="13" y="4" width="2" height="1" fill="#000"/><rect x="4" y="5" width="2" height="1" fill="#000"/><rect x="8" y="5" width="2" height="1" fill="#000"/><rect x="13" y="5" width="2" height="1" fill="#000"/><rect x="4" y="6" width="2" height="1" fill="#000"/><rect x="8" y="6" width="2" height="1" fill="#000"/><rect x="13" y="6" width="2" height="1" fill="#000"/><rect x="4" y="7" width="2" height="1" fill="#000"/><rect x="8" y="7" width="2" height="1" fill="#000"/><rect x="13" y="7" width="2" height="1" fill="#000"/><rect x="0" y="8" width="2" height="1" fill="#000"/><rect x="4" y="8" width="2" height="1" fill="#000"/><rect x="8" y="8" width="2" height="1" fill="#000"/><rect x="13" y="8" width="2" height="1" fill="#000"/><rect x="1" y="9" width="4" height="1" fill="#000"/><rect x="8" y="9" width="6" height="1" fill="#000"/></svg>
<svg class="a" style="left:563px;top:64px" width="20" height="9" shape-rendering="crispEdges"><rect x="0" y="0" width="6" height="1" fill="#000"/><rect x="7" y="0" width="2" height="1" fill="#000"/><rect x="11" y="0" width="2" height="1" fill="#000"/><rect x="14" y="0" width="5" height="1" fill="#000"/><rect x="2" y="1" width="2" height="1" fill="#000"/><rect x="7" y="1" width="2" height="1" fill="#000"/><rect x="11" y="1" width="2" height="1" fill="#000"/><rect x="14" y="1" width="2" height="1" fill="#000"/><rect x="17" y="1" width="3" height="1" fill="#000"/><rect x="2" y="2" width="2" height="1" fill="#000"/><rect x="7" y="2" width="2" height="1" fill="#000"/><rect x="11" y="2" width="2" height="1" fill="#000"/><rect x="14" y="2" width="2" height="1" fill="#000"/><rect x="18" y="2" width="2" height="1" fill="#000"/><rect x="2" y="3" width="2" height="1" fill="#000"/><rect x="7" y="3" width="2" height="1" fill="#000"/><rect x="11" y="3" width="2" height="1" fill="#000"/><rect x="14" y="3" width="2" height="1" fill="#000"/><rect x="18" y="3" width="2" height="1" fill="#000"/><rect x="2" y="4" width="2" height="1" fill="#000"/><rect x="7" y="4" width="6" height="1" fill="#000"/><rect x="14" y="4" width="2" height="1" fill="#000"/><rect x="18" y="4" width="2" height="1" fill="#000"/><rect x="2" y="5" width="2" height="1" fill="#000"/><rect x="7" y="5" width="2" height="1" fill="#000"/><rect x="11" y="5" width="2" height="1" fill="#000"/><rect x="14" y="5" width="2" height="1" fill="#000"/><rect x="18" y="5" width="2" height="1" fill="#000"/><rect x="2" y="6" width="2" height="1" fill="#000"/><rect x="7" y="6" width="2" height="1" fill="#000"/><rect x="11" y="6" width="2" height="1" fill="#000"/><rect x="14" y="6" width="2" height="1" fill="#000"/><rect x="18" y="6" width="2" height="1" fill="#000"/><rect x="2" y="7" width="2" height="1" fill="#000"/><rect x="7" y="7" width="2" height="1" fill="#000"/><rect x="11" y="7" width="2" height="1" fill="#000"/><rect x="14" y="7" width="2" height="1" fill="#000"/><rect x="17" y="7" width="3" height="1" fill="#000"/><rect x="2" y="8" width="2" height="1" fill="#000"/><rect x="7" y="8" width="2" height="1" fill="#000"/><rect x="11" y="8" width="2" height="1" fill="#000"/><rect x="14" y="8" width="5" height="1" fill="#000"/></svg>
<svg class="a" style="left:589px;top:64px" width="17" height="9" shape-rendering="crispEdges"><rect x="0" y="0" width="2" height="1" fill="#000"/><rect x="3" y="0" width="2" height="1" fill="#000"/><rect x="8" y="0" width="2" height="1" fill="#000"/><rect x="11" y="0" width="5" height="1" fill="#000"/><rect x="0" y="1" width="2" height="1" fill="#000"/><rect x="3" y="1" width="3" height="1" fill="#000"/><rect x="7" y="1" width="3" height="1" fill="#000"/><rect x="11" y="1" width="2" height="1" fill="#000"/><rect x="14" y="1" width="3" height="1" fill="#000"/><rect x="0" y="2" width="2" height="1" fill="#000"/><rect x="3" y="2" width="7" height="1" fill="#000"/><rect x="11" y="2" width="2" height="1" fill="#000"/><rect x="15" y="2" width="2" height="1" fill="#000"/><rect x="0" y="3" width="2" height="1" fill="#000"/><rect x="3" y="3" width="2" height="1" fill="#000"/><rect x="6" y="3" width="1" height="1" fill="#000"/><rect x="8" y="3" width="2" height="1" fill="#000"/><rect x="11" y="3" width="2" height="1" fill="#000"/><rect x="15" y="3" width="2" height="1" fill="#000"/><rect x="0" y="4" width="2" height="1" fill="#000"/><rect x="3" y="4" width="2" height="1" fill="#000"/><rect x="6" y="4" width="1" height="1" fill="#000"/><rect x="8" y="4" width="2" height="1" fill="#000"/><rect x="11" y="4" width="2" height="1" fill="#000"/><rect x="15" y="4" width="2" height="1" fill="#000"/><rect x="0" y="5" width="2" height="1" fill="#000"/><rect x="3" y="5" width="2" height="1" fill="#000"/><rect x="8" y="5" width="2" height="1" fill="#000"/><rect x="11" y="5" width="2" height="1" fill="#000"/><rect x="15" y="5" width="2" height="1" fill="#000"/><rect x="0" y="6" width="2" height="1" fill="#000"/><rect x="3" y="6" width="2" height="1" fill="#000"/><rect x="8" y="6" width="2" height="1" fill="#000"/><rect x="11" y="6" width="2" height="1" fill="#000"/><rect x="15" y="6" width="2" height="1" fill="#000"/><rect x="0" y="7" width="2" height="1" fill="#000"/><rect x="3" y="7" width="2" height="1" fill="#000"/><rect x="8" y="7" width="2" height="1" fill="#000"/><rect x="11" y="7" width="2" height="1" fill="#000"/><rect x="14" y="7" width="3" height="1" fill="#000"/><rect x="0" y="8" width="2" height="1" fill="#000"/><rect x="3" y="8" width="2" height="1" fill="#000"/><rect x="8" y="8" width="2" height="1" fill="#000"/><rect x="11" y="8" width="5" height="1" fill="#000"/></svg>
<svg class="a" style="left:627px;top:63px" width="6" height="10" shape-rendering="crispEdges"><rect x="1" y="0" width="4" height="1" fill="#0000FF"/><rect x="0" y="1" width="2" height="1" fill="#0000FF"/><rect x="4" y="1" width="2" height="1" fill="#0000FF"/><rect x="0" y="2" width="2" height="1" fill="#0000FF"/><rect x="4" y="2" width="2" height="1" fill="#0000FF"/><rect x="0" y="3" width="2" height="1" fill="#0000FF"/><rect x="4" y="3" width="2" height="1" fill="#0000FF"/><rect x="0" y="4" width="2" height="1" fill="#0000FF"/><rect x="4" y="4" width="2" height="1" fill="#0000FF"/><rect x="0" y="5" width="2" height="1" fill="#0000FF"/><rect x="4" y="5" width="2" height="1" fill="#0000FF"/><rect x="0" y="6" width="2" height="1" fill="#0000FF"/><rect x="4" y="6" width="2" height="1" fill="#0000FF"/><rect x="0" y="7" width="2" height="1" fill="#0000FF"/><rect x="4" y="7" width="2" height="1" fill="#0000FF"/><rect x="0" y="8" width="2" height="1" fill="#0000FF"/><rect x="4" y="8" width="2" height="1" fill="#0000FF"/><rect x="1" y="9" width="4" height="1" fill="#0000FF"/></svg>
<svg class="a" style="left:646px;top:63px" width="19" height="9" shape-rendering="crispEdges"><rect x="0" y="0" width="2" height="1" fill="#000"/><rect x="5" y="0" width="2" height="1" fill="#000"/><rect x="9" y="0" width="2" height="1" fill="#000"/><rect x="14" y="0" width="2" height="1" fill="#000"/><rect x="17" y="0" width="2" height="1" fill="#000"/><rect x="0" y="1" width="3" height="1" fill="#000"/><rect x="4" y="1" width="3" height="1" fill="#000"/><rect x="8" y="1" width="4" height="1" fill="#000"/><rect x="14" y="1" width="2" height="1" fill="#000"/><rect x="17" y="1" width="2" height="1" fill="#000"/><rect x="0" y="2" width="7" height="1" fill="#000"/><rect x="8" y="2" width="1" height="1" fill="#000"/><rect x="11" y="2" width="1" height="1" fill="#000"/><rect x="15" y="2" width="3" height="1" fill="#000"/><rect x="0" y="3" width="2" height="1" fill="#000"/><rect x="3" y="3" width="1" height="1" fill="#000"/><rect x="5" y="3" width="4" height="1" fill="#000"/><rect x="11" y="3" width="2" height="1" fill="#000"/><rect x="15" y="3" width="3" height="1" fill="#000"/><rect x="0" y="4" width="2" height="1" fill="#000"/><rect x="3" y="4" width="1" height="1" fill="#000"/><rect x="5" y="4" width="4" height="1" fill="#000"/><rect x="11" y="4" width="2" height="1" fill="#000"/><rect x="16" y="4" width="1" height="1" fill="#000"/><rect x="0" y="5" width="2" height="1" fill="#000"/><rect x="5" y="5" width="8" height="1" fill="#000"/><rect x="15" y="5" width="3" height="1" fill="#000"/><rect x="0" y="6" width="2" height="1" fill="#000"/><rect x="5" y="6" width="4" height="1" fill="#000"/><rect x="11" y="6" width="2" height="1" fill="#000"/><rect x="15" y="6" width="3" height="1" fill="#000"/><rect x="0" y="7" width="2" height="1" fill="#000"/><rect x="5" y="7" width="4" height="1" fill="#000"/><rect x="11" y="7" width="2" height="1" fill="#000"/><rect x="14" y="7" width="2" height="1" fill="#000"/><rect x="17" y="7" width="2" height="1" fill="#000"/><rect x="0" y="8" width="2" height="1" fill="#000"/><rect x="5" y="8" width="4" height="1" fill="#000"/><rect x="11" y="8" width="2" height="1" fill="#000"/><rect x="14" y="8" width="2" height="1" fill="#000"/><rect x="17" y="8" width="2" height="1" fill="#000"/></svg>
<svg class="a" style="left:671px;top:64px" width="19" height="8" shape-rendering="crispEdges"><rect x="2" y="0" width="2" height="1" fill="#000"/><rect x="6" y="0" width="2" height="1" fill="#000"/><rect x="10" y="0" width="2" height="1" fill="#000"/><rect x="13" y="0" width="5" height="1" fill="#000"/><rect x="1" y="1" width="4" height="1" fill="#000"/><rect x="6" y="1" width="2" height="1" fill="#000"/><rect x="10" y="1" width="4" height="1" fill="#000"/><rect x="17" y="1" width="2" height="1" fill="#000"/><rect x="0" y="2" width="2" height="1" fill="#000"/><rect x="4" y="2" width="4" height="1" fill="#000"/><rect x="10" y="2" width="4" height="1" fill="#000"/><rect x="0" y="3" width="2" height="1" fill="#000"/><rect x="4" y="3" width="4" height="1" fill="#000"/><rect x="10" y="3" width="4" height="1" fill="#000"/><rect x="15" y="3" width="4" height="1" fill="#000"/><rect x="0" y="4" width="6" height="1" fill="#000"/><rect x="7" y="4" width="4" height="1" fill="#000"/><rect x="12" y="4" width="2" height="1" fill="#000"/><rect x="17" y="4" width="2" height="1" fill="#000"/><rect x="0" y="5" width="2" height="1" fill="#000"/><rect x="4" y="5" width="2" height="1" fill="#000"/><rect x="7" y="5" width="4" height="1" fill="#000"/><rect x="12" y="5" width="2" height="1" fill="#000"/><rect x="17" y="5" width="2" height="1" fill="#000"/><rect x="0" y="6" width="2" height="1" fill="#000"/><rect x="4" y="6" width="2" height="1" fill="#000"/><rect x="8" y="6" width="2" height="1" fill="#000"/><rect x="12" y="6" width="2" height="1" fill="#000"/><rect x="16" y="6" width="3" height="1" fill="#000"/><rect x="0" y="7" width="2" height="1" fill="#000"/><rect x="4" y="7" width="2" height="1" fill="#000"/><rect x="8" y="7" width="2" height="1" fill="#000"/><rect x="13" y="7" width="4" height="1" fill="#000"/><rect x="18" y="7" width="1" height="1" fill="#000"/></svg>
<div class="a" style="left:6px;top:84px;width:756px;height:422px;background:#979568;border-top:1px solid #ACA899;border-left:1px solid #B0AC9C;border-right:2px solid #fff;border-bottom:2px solid #fff;box-shadow:inset 1px 1px 0 #716F64"></div>
<div class="a" style="left:4px;top:50px;width:1px;height:475px;background:#ACA899"></div>
<div class="a" style="left:4px;top:30px;width:1px;height:20px;background:#FAF8EE"></div>
<div class="a" style="left:5px;top:50px;width:1px;height:475px;background:#716F64"></div>
<div class="a" style="left:762px;top:30px;width:2px;height:496px;background:#F8F6EC"></div>
<div class="a" style="left:4px;top:525px;width:760px;height:1px;background:#FFFDF4"></div>
<svg class="a" style="left:0;top:0" width="768" height="530" viewBox="0 0 768 530">
<rect x="97" y="95" width="663" height="350" fill="#CBCB99"/>
<line x1="113.5" y1="100" x2="113.5" y2="443" stroke="#A3A3B3" stroke-width="1" stroke-dasharray="3 3"/>
<line x1="133.5" y1="100" x2="133.5" y2="443" stroke="#A3A3B3" stroke-width="1" stroke-dasharray="3 3"/>
<line x1="149.5" y1="100" x2="149.5" y2="443" stroke="#A3A3B3" stroke-width="1" stroke-dasharray="3 3"/>
<line x1="163.5" y1="100" x2="163.5" y2="443" stroke="#A3A3B3" stroke-width="1" stroke-dasharray="3 3"/>
<line x1="176.5" y1="100" x2="176.5" y2="443" stroke="#A3A3B3" stroke-width="1" stroke-dasharray="3 3"/>
<rect x="186" y="97" width="2" height="346" fill="#A9A9AF"/>
<line x1="261.5" y1="100" x2="261.5" y2="443" stroke="#A3A3B3" stroke-width="1" stroke-dasharray="3 3"/>
<line x1="304.5" y1="100" x2="304.5" y2="443" stroke="#A3A3B3" stroke-width="1" stroke-dasharray="3 3"/>
<line x1="334.5" y1="100" x2="334.5" y2="443" stroke="#A3A3B3" stroke-width="1" stroke-dasharray="3 3"/>
<line x1="358.5" y1="100" x2="358.5" y2="443" stroke="#A3A3B3" stroke-width="1" stroke-dasharray="3 3"/>
<line x1="377.5" y1="100" x2="377.5" y2="443" stroke="#A3A3B3" stroke-width="1" stroke-dasharray="3 3"/>
<line x1="394.5" y1="100" x2="394.5" y2="443" stroke="#A3A3B3" stroke-width="1" stroke-dasharray="3 3"/>
<line x1="408.5" y1="100" x2="408.5" y2="443" stroke="#A3A3B3" stroke-width="1" stroke-dasharray="3 3"/>
<line x1="420.5" y1="100" x2="420.5" y2="443" stroke="#A3A3B3" stroke-width="1" stroke-dasharray="3 3"/>
<rect x="431" y="97" width="2" height="346" fill="#A9A9AF"/>
<line x1="505.5" y1="100" x2="505.5" y2="443" stroke="#A3A3B3" stroke-width="1" stroke-dasharray="3 3"/>
<line x1="548.5" y1="100" x2="548.5" y2="443" stroke="#A3A3B3" stroke-width="1" stroke-dasharray="3 3"/>
<line x1="579.5" y1="100" x2="579.5" y2="443" stroke="#A3A3B3" stroke-width="1" stroke-dasharray="3 3"/>
<line x1="602.5" y1="100" x2="602.5" y2="443" stroke="#A3A3B3" stroke-width="1" stroke-dasharray="3 3"/>
<line x1="622.5" y1="100" x2="622.5" y2="443" stroke="#A3A3B3" stroke-width="1" stroke-dasharray="3 3"/>
<line x1="638.5" y1="100" x2="638.5" y2="443" stroke="#A3A3B3" stroke-width="1" stroke-dasharray="3 3"/>
<line x1="652.5" y1="100" x2="652.5" y2="443" stroke="#A3A3B3" stroke-width="1" stroke-dasharray="3 3"/>
<line x1="665.5" y1="100" x2="665.5" y2="443" stroke="#A3A3B3" stroke-width="1" stroke-dasharray="3 3"/>
<rect x="675" y="97" width="2" height="346" fill="#A9A9AF"/>
<line x1="750.5" y1="100" x2="750.5" y2="443" stroke="#A3A3B3" stroke-width="1" stroke-dasharray="3 3"/>
<line x1="98" y1="125.5" x2="759" y2="125.5" stroke="#A3A3B3" stroke-width="1" stroke-dasharray="3 3"/>
<line x1="98" y1="154.5" x2="759" y2="154.5" stroke="#A3A3B3" stroke-width="1" stroke-dasharray="3 3"/>
<line x1="98" y1="183.5" x2="759" y2="183.5" stroke="#A3A3B3" stroke-width="1" stroke-dasharray="3 3"/>
<line x1="98" y1="212.5" x2="759" y2="212.5" stroke="#A3A3B3" stroke-width="1" stroke-dasharray="3 3"/>
<line x1="98" y1="241.5" x2="759" y2="241.5" stroke="#A3A3B3" stroke-width="1" stroke-dasharray="3 3"/>
<line x1="98" y1="270.5" x2="759" y2="270.5" stroke="#A3A3B3" stroke-width="1" stroke-dasharray="3 3"/>
<line x1="98" y1="299.5" x2="759" y2="299.5" stroke="#A3A3B3" stroke-width="1" stroke-dasharray="3 3"/>
<line x1="98" y1="328.5" x2="759" y2="328.5" stroke="#A3A3B3" stroke-width="1" stroke-dasharray="3 3"/>
<line x1="98" y1="357.5" x2="759" y2="357.5" stroke="#A3A3B3" stroke-width="1" stroke-dasharray="3 3"/>
<line x1="98" y1="386.5" x2="759" y2="386.5" stroke="#A3A3B3" stroke-width="1" stroke-dasharray="3 3"/>
<line x1="98" y1="415.5" x2="759" y2="415.5" stroke="#A3A3B3" stroke-width="1" stroke-dasharray="3 3"/>
<rect x="97" y="95" width="663" height="2" fill="#000"/>
<rect x="97" y="95" width="2" height="350" fill="#000"/>
<rect x="759" y="95" width="1" height="350" fill="#000"/>
<rect x="97" y="443" width="663" height="2" fill="#000"/>
<polyline fill="none" stroke="#0000FF" stroke-width="2" stroke-linejoin="miter" shape-rendering="crispEdges" points="374,444 389,444 396.25,439.6 406.7,434.9 417.1,430.2 427.5,424.5 435.9,418.6 443.2,411.7 449.8,405.4 460.3,396.8 464.3,388.3 469.6,383 473.5,375.1 479.9,361.2 484.3,350.4 488.9,335.3 493.4,317.2 494.5,310 499,305 499,270 500,270 500,234 501,234 501,211 502,211 502,187 503,187 503,163 504,163 504,150 505,150 505,138 507,138 508,140 508,154 509,154 509,169 510,169 510,196 511,196 511,223 512,223 512,251 513,251 513,304 514.8,307.5 517.1,319.6 520.1,333.2 523.1,346.8 526.1,360.4 529.9,370.9 532.6,379 534.8,389.6 540.1,401.7 542.4,406.3 546.1,413.8 549.9,423.6 554.4,431.9 559,441 561.3,444"/>
<polyline fill="none" stroke="#FF0000" stroke-width="2" stroke-linejoin="miter" shape-rendering="crispEdges" points="97,444 372.8,444 375.4,441.7 385.8,438 396.25,433.3 406.7,429.2 417.1,424.5 425.4,419.8 430,415.3 434,412.7 437.9,410.4 443.2,405.4 449.8,398.8 456.4,392.5 461,387.6 464.3,381.7 468.9,375.1 472.2,369.1 475.5,362.5 478.8,353.3 481.3,347.4 485.8,332.3 490.4,317.2 493,305 493.5,298 498,296 498,261 499,261 499,225 500,225 500,202 501,202 501,178 502,178 502,154 503,154 503,141 504,141 504,129 506,129 507,131 507,145 508,145 508,160 509,160 509,187 510,187 510,214 511,214 511,242 512,242 512,295 514,299 516,305 517.1,309 519.3,321.1 521.6,333.2 523.9,343.8 526.1,352.8 529.2,363.4 532.9,369.4 533.5,379 536.3,383.6 540.1,391.1 542.4,399.5 546.1,404.7 549.2,413.8 553,421.4 556.7,427.4 560.5,433.4 563.5,443.3 564.5,444 760,444"/>
<rect x="80.5" y="142.5" width="6" height="301" fill="#00FF00" stroke="#000" stroke-width="1"/>
<rect x="88.5" y="133.5" width="6" height="310" fill="#00FF00" stroke="#000" stroke-width="1"/>
<rect x="80.5" y="129.5" width="6" height="3" fill="#FF0000" stroke="#000" stroke-width="1"/>
<rect x="88.5" y="121.5" width="6" height="3" fill="#FF0000" stroke="#000" stroke-width="1"/>
</svg>
<svg class="a" style="left:64px;top:91px" width="14" height="9" shape-rendering="crispEdges" fill="#000"><rect x="3" y="0" width="1" height="1"/><rect x="2" y="1" width="2" height="1"/><rect x="1" y="2" width="1" height="1"/><rect x="3" y="2" width="1" height="1"/><rect x="3" y="3" width="1" height="1"/><rect x="3" y="4" width="1" height="1"/><rect x="3" y="5" width="1" height="1"/><rect x="3" y="6" width="1" height="1"/><rect x="3" y="7" width="1" height="1"/><rect x="3" y="8" width="1" height="1"/><rect x="9" y="0" width="3" height="1"/><rect x="8" y="1" width="1" height="1"/><rect x="12" y="1" width="1" height="1"/><rect x="8" y="2" width="1" height="1"/><rect x="12" y="2" width="1" height="1"/><rect x="8" y="3" width="1" height="1"/><rect x="12" y="3" width="1" height="1"/><rect x="8" y="4" width="1" height="1"/><rect x="12" y="4" width="1" height="1"/><rect x="8" y="5" width="1" height="1"/><rect x="12" y="5" width="1" height="1"/><rect x="8" y="6" width="1" height="1"/><rect x="12" y="6" width="1" height="1"/><rect x="8" y="7" width="1" height="1"/><rect x="12" y="7" width="1" height="1"/><rect x="9" y="8" width="3" height="1"/></svg>
<svg class="a" style="left:71px;top:120px" width="7" height="9" shape-rendering="crispEdges" fill="#000"><rect x="2" y="0" width="3" height="1"/><rect x="1" y="1" width="1" height="1"/><rect x="5" y="1" width="1" height="1"/><rect x="1" y="2" width="1" height="1"/><rect x="5" y="2" width="1" height="1"/><rect x="1" y="3" width="1" height="1"/><rect x="5" y="3" width="1" height="1"/><rect x="1" y="4" width="1" height="1"/><rect x="5" y="4" width="1" height="1"/><rect x="1" y="5" width="1" height="1"/><rect x="5" y="5" width="1" height="1"/><rect x="1" y="6" width="1" height="1"/><rect x="5" y="6" width="1" height="1"/><rect x="1" y="7" width="1" height="1"/><rect x="5" y="7" width="1" height="1"/><rect x="2" y="8" width="3" height="1"/></svg>
<svg class="a" style="left:59px;top:149px" width="19" height="9" shape-rendering="crispEdges" fill="#000"><rect x="1" y="5" width="3" height="1"/><rect x="8" y="0" width="1" height="1"/><rect x="7" y="1" width="2" height="1"/><rect x="6" y="2" width="1" height="1"/><rect x="8" y="2" width="1" height="1"/><rect x="8" y="3" width="1" height="1"/><rect x="8" y="4" width="1" height="1"/><rect x="8" y="5" width="1" height="1"/><rect x="8" y="6" width="1" height="1"/><rect x="8" y="7" width="1" height="1"/><rect x="8" y="8" width="1" height="1"/><rect x="14" y="0" width="3" height="1"/><rect x="13" y="1" width="1" height="1"/><rect x="17" y="1" width="1" height="1"/><rect x="13" y="2" width="1" height="1"/><rect x="17" y="2" width="1" height="1"/><rect x="13" y="3" width="1" height="1"/><rect x="17" y="3" width="1" height="1"/><rect x="13" y="4" width="1" height="1"/><rect x="17" y="4" width="1" height="1"/><rect x="13" y="5" width="1" height="1"/><rect x="17" y="5" width="1" height="1"/><rect x="13" y="6" width="1" height="1"/><rect x="17" y="6" width="1" height="1"/><rect x="13" y="7" width="1" height="1"/><rect x="17" y="7" width="1" height="1"/><rect x="14" y="8" width="3" height="1"/></svg>
<svg class="a" style="left:59px;top:178px" width="19" height="9" shape-rendering="crispEdges" fill="#000"><rect x="1" y="5" width="3" height="1"/><rect x="7" y="0" width="3" height="1"/><rect x="6" y="1" width="1" height="1"/><rect x="10" y="1" width="1" height="1"/><rect x="10" y="2" width="1" height="1"/><rect x="10" y="3" width="1" height="1"/><rect x="9" y="4" width="1" height="1"/><rect x="8" y="5" width="1" height="1"/><rect x="7" y="6" width="1" height="1"/><rect x="6" y="7" width="1" height="1"/><rect x="6" y="8" width="5" height="1"/><rect x="14" y="0" width="3" height="1"/><rect x="13" y="1" width="1" height="1"/><rect x="17" y="1" width="1" height="1"/><rect x="13" y="2" width="1" height="1"/><rect x="17" y="2" width="1" height="1"/><rect x="13" y="3" width="1" height="1"/><rect x="17" y="3" width="1" height="1"/><rect x="13" y="4" width="1" height="1"/><rect x="17" y="4" width="1" height="1"/><rect x="13" y="5" width="1" height="1"/><rect x="17" y="5" width="1" height="1"/><rect x="13" y="6" width="1" height="1"/><rect x="17" y="6" width="1" height="1"/><rect x="13" y="7" width="1" height="1"/><rect x="17" y="7" width="1" height="1"/><rect x="14" y="8" width="3" height="1"/></svg>
<svg class="a" style="left:59px;top:207px" width="19" height="9" shape-rendering="crispEdges" fill="#000"><rect x="1" y="5" width="3" height="1"/><rect x="7" y="0" width="3" height="1"/><rect x="6" y="1" width="1" height="1"/><rect x="10" y="1" width="1" height="1"/><rect x="10" y="2" width="1" height="1"/><rect x="10" y="3" width="1" height="1"/><rect x="8" y="4" width="2" height="1"/><rect x="10" y="5" width="1" height="1"/><rect x="10" y="6" width="1" height="1"/><rect x="6" y="7" width="1" height="1"/><rect x="10" y="7" width="1" height="1"/><rect x="7" y="8" width="3" height="1"/><rect x="14" y="0" width="3" height="1"/><rect x="13" y="1" width="1" height="1"/><rect x="17" y="1" width="1" height="1"/><rect x="13" y="2" width="1" height="1"/><rect x="17" y="2" width="1" height="1"/><rect x="13" y="3" width="1" height="1"/><rect x="17" y="3" width="1" height="1"/><rect x="13" y="4" width="1" height="1"/><rect x="17" y="4" width="1" height="1"/><rect x="13" y="5" width="1" height="1"/><rect x="17" y="5" width="1" height="1"/><rect x="13" y="6" width="1" height="1"/><rect x="17" y="6" width="1" height="1"/><rect x="13" y="7" width="1" height="1"/><rect x="17" y="7" width="1" height="1"/><rect x="14" y="8" width="3" height="1"/></svg>
<svg class="a" style="left:59px;top:236px" width="19" height="9" shape-rendering="crispEdges" fill="#000"><rect x="1" y="5" width="3" height="1"/><rect x="9" y="0" width="1" height="1"/><rect x="8" y="1" width="2" height="1"/><rect x="7" y="2" width="1" height="1"/><rect x="9" y="2" width="1" height="1"/><rect x="6" y="3" width="1" height="1"/><rect x="9" y="3" width="1" height="1"/><rect x="6" y="4" width="1" height="1"/><rect x="9" y="4" width="1" height="1"/><rect x="6" y="5" width="5" height="1"/><rect x="9" y="6" width="1" height="1"/><rect x="9" y="7" width="1" height="1"/><rect x="9" y="8" width="1" height="1"/><rect x="14" y="0" width="3" height="1"/><rect x="13" y="1" width="1" height="1"/><rect x="17" y="1" width="1" height="1"/><rect x="13" y="2" width="1" height="1"/><rect x="17" y="2" width="1" height="1"/><rect x="13" y="3" width="1" height="1"/><rect x="17" y="3" width="1" height="1"/><rect x="13" y="4" width="1" height="1"/><rect x="17" y="4" width="1" height="1"/><rect x="13" y="5" width="1" height="1"/><rect x="17" y="5" width="1" height="1"/><rect x="13" y="6" width="1" height="1"/><rect x="17" y="6" width="1" height="1"/><rect x="13" y="7" width="1" height="1"/><rect x="17" y="7" width="1" height="1"/><rect x="14" y="8" width="3" height="1"/></svg>
<svg class="a" style="left:59px;top:265px" width="19" height="9" shape-rendering="crispEdges" fill="#000"><rect x="1" y="5" width="3" height="1"/><rect x="7" y="0" width="4" height="1"/><rect x="6" y="1" width="1" height="1"/><rect x="6" y="2" width="1" height="1"/><rect x="6" y="3" width="4" height="1"/><rect x="10" y="4" width="1" height="1"/><rect x="10" y="5" width="1" height="1"/><rect x="10" y="6" width="1" height="1"/><rect x="6" y="7" width="1" height="1"/><rect x="10" y="7" width="1" height="1"/><rect x="7" y="8" width="3" height="1"/><rect x="14" y="0" width="3" height="1"/><rect x="13" y="1" width="1" height="1"/><rect x="17" y="1" width="1" height="1"/><rect x="13" y="2" width="1" height="1"/><rect x="17" y="2" width="1" height="1"/><rect x="13" y="3" width="1" height="1"/><rect x="17" y="3" width="1" height="1"/><rect x="13" y="4" width="1" height="1"/><rect x="17" y="4" width="1" height="1"/><rect x="13" y="5" width="1" height="1"/><rect x="17" y="5" width="1" height="1"/><rect x="13" y="6" width="1" height="1"/><rect x="17" y="6" width="1" height="1"/><rect x="13" y="7" width="1" height="1"/><rect x="17" y="7" width="1" height="1"/><rect x="14" y="8" width="3" height="1"/></svg>
<svg class="a" style="left:59px;top:294px" width="19" height="9" shape-rendering="crispEdges" fill="#000"><rect x="1" y="5" width="3" height="1"/><rect x="8" y="0" width="2" height="1"/><rect x="7" y="1" width="1" height="1"/><rect x="6" y="2" width="1" height="1"/><rect x="6" y="3" width="1" height="1"/><rect x="6" y="4" width="4" height="1"/><rect x="6" y="5" width="1" height="1"/><rect x="10" y="5" width="1" height="1"/><rect x="6" y="6" width="1" height="1"/><rect x="10" y="6" width="1" height="1"/><rect x="6" y="7" width="1" height="1"/><rect x="10" y="7" width="1" height="1"/><rect x="7" y="8" width="3" height="1"/><rect x="14" y="0" width="3" height="1"/><rect x="13" y="1" width="1" height="1"/><rect x="17" y="1" width="1" height="1"/><rect x="13" y="2" width="1" height="1"/><rect x="17" y="2" width="1" height="1"/><rect x="13" y="3" width="1" height="1"/><rect x="17" y="3" width="1" height="1"/><rect x="13" y="4" width="1" height="1"/><rect x="17" y="4" width="1" height="1"/><rect x="13" y="5" width="1" height="1"/><rect x="17" y="5" width="1" height="1"/><rect x="13" y="6" width="1" height="1"/><rect x="17" y="6" width="1" height="1"/><rect x="13" y="7" width="1" height="1"/><rect x="17" y="7" width="1" height="1"/><rect x="14" y="8" width="3" height="1"/></svg>
<svg class="a" style="left:59px;top:323px" width="19" height="9" shape-rendering="crispEdges" fill="#000"><rect x="1" y="5" width="3" height="1"/><rect x="6" y="0" width="5" height="1"/><rect x="10" y="1" width="1" height="1"/><rect x="10" y="2" width="1" height="1"/><rect x="9" y="3" width="1" height="1"/><rect x="9" y="4" width="1" height="1"/><rect x="8" y="5" width="1" height="1"/><rect x="8" y="6" width="1" height="1"/><rect x="7" y="7" width="1" height="1"/><rect x="7" y="8" width="1" height="1"/><rect x="14" y="0" width="3" height="1"/><rect x="13" y="1" width="1" height="1"/><rect x="17" y="1" width="1" height="1"/><rect x="13" y="2" width="1" height="1"/><rect x="17" y="2" width="1" height="1"/><rect x="13" y="3" width="1" height="1"/><rect x="17" y="3" width="1" height="1"/><rect x="13" y="4" width="1" height="1"/><rect x="17" y="4" width="1" height="1"/><rect x="13" y="5" width="1" height="1"/><rect x="17" y="5" width="1" height="1"/><rect x="13" y="6" width="1" height="1"/><rect x="17" y="6" width="1" height="1"/><rect x="13" y="7" width="1" height="1"/><rect x="17" y="7" width="1" height="1"/><rect x="14" y="8" width="3" height="1"/></svg>
<svg class="a" style="left:59px;top:352px" width="19" height="9" shape-rendering="crispEdges" fill="#000"><rect x="1" y="5" width="3" height="1"/><rect x="7" y="0" width="3" height="1"/><rect x="6" y="1" width="1" height="1"/><rect x="10" y="1" width="1" height="1"/><rect x="6" y="2" width="1" height="1"/><rect x="10" y="2" width="1" height="1"/><rect x="6" y="3" width="1" height="1"/><rect x="10" y="3" width="1" height="1"/><rect x="7" y="4" width="3" height="1"/><rect x="6" y="5" width="1" height="1"/><rect x="10" y="5" width="1" height="1"/><rect x="6" y="6" width="1" height="1"/><rect x="10" y="6" width="1" height="1"/><rect x="6" y="7" width="1" height="1"/><rect x="10" y="7" width="1" height="1"/><rect x="7" y="8" width="3" height="1"/><rect x="14" y="0" width="3" height="1"/><rect x="13" y="1" width="1" height="1"/><rect x="17" y="1" width="1" height="1"/><rect x="13" y="2" width="1" height="1"/><rect x="17" y="2" width="1" height="1"/><rect x="13" y="3" width="1" height="1"/><rect x="17" y="3" width="1" height="1"/><rect x="13" y="4" width="1" height="1"/><rect x="17" y="4" width="1" height="1"/><rect x="13" y="5" width="1" height="1"/><rect x="17" y="5" width="1" height="1"/><rect x="13" y="6" width="1" height="1"/><rect x="17" y="6" width="1" height="1"/><rect x="13" y="7" width="1" height="1"/><rect x="17" y="7" width="1" height="1"/><rect x="14" y="8" width="3" height="1"/></svg>
<svg class="a" style="left:59px;top:381px" width="19" height="9" shape-rendering="crispEdges" fill="#000"><rect x="1" y="5" width="3" height="1"/><rect x="7" y="0" width="3" height="1"/><rect x="6" y="1" width="1" height="1"/><rect x="10" y="1" width="1" height="1"/><rect x="6" y="2" width="1" height="1"/><rect x="10" y="2" width="1" height="1"/><rect x="6" y="3" width="1" height="1"/><rect x="10" y="3" width="1" height="1"/><rect x="7" y="4" width="4" height="1"/><rect x="10" y="5" width="1" height="1"/><rect x="10" y="6" width="1" height="1"/><rect x="9" y="7" width="1" height="1"/><rect x="7" y="8" width="2" height="1"/><rect x="14" y="0" width="3" height="1"/><rect x="13" y="1" width="1" height="1"/><rect x="17" y="1" width="1" height="1"/><rect x="13" y="2" width="1" height="1"/><rect x="17" y="2" width="1" height="1"/><rect x="13" y="3" width="1" height="1"/><rect x="17" y="3" width="1" height="1"/><rect x="13" y="4" width="1" height="1"/><rect x="17" y="4" width="1" height="1"/><rect x="13" y="5" width="1" height="1"/><rect x="17" y="5" width="1" height="1"/><rect x="13" y="6" width="1" height="1"/><rect x="17" y="6" width="1" height="1"/><rect x="13" y="7" width="1" height="1"/><rect x="17" y="7" width="1" height="1"/><rect x="14" y="8" width="3" height="1"/></svg>
<svg class="a" style="left:52px;top:410px" width="26" height="9" shape-rendering="crispEdges" fill="#000"><rect x="1" y="5" width="3" height="1"/><rect x="8" y="0" width="1" height="1"/><rect x="7" y="1" width="2" height="1"/><rect x="6" y="2" width="1" height="1"/><rect x="8" y="2" width="1" height="1"/><rect x="8" y="3" width="1" height="1"/><rect x="8" y="4" width="1" height="1"/><rect x="8" y="5" width="1" height="1"/><rect x="8" y="6" width="1" height="1"/><rect x="8" y="7" width="1" height="1"/><rect x="8" y="8" width="1" height="1"/><rect x="14" y="0" width="3" height="1"/><rect x="13" y="1" width="1" height="1"/><rect x="17" y="1" width="1" height="1"/><rect x="13" y="2" width="1" height="1"/><rect x="17" y="2" width="1" height="1"/><rect x="13" y="3" width="1" height="1"/><rect x="17" y="3" width="1" height="1"/><rect x="13" y="4" width="1" height="1"/><rect x="17" y="4" width="1" height="1"/><rect x="13" y="5" width="1" height="1"/><rect x="17" y="5" width="1" height="1"/><rect x="13" y="6" width="1" height="1"/><rect x="17" y="6" width="1" height="1"/><rect x="13" y="7" width="1" height="1"/><rect x="17" y="7" width="1" height="1"/><rect x="14" y="8" width="3" height="1"/><rect x="21" y="0" width="3" height="1"/><rect x="20" y="1" width="1" height="1"/><rect x="24" y="1" width="1" height="1"/><rect x="20" y="2" width="1" height="1"/><rect x="24" y="2" width="1" height="1"/><rect x="20" y="3" width="1" height="1"/><rect x="24" y="3" width="1" height="1"/><rect x="20" y="4" width="1" height="1"/><rect x="24" y="4" width="1" height="1"/><rect x="20" y="5" width="1" height="1"/><rect x="24" y="5" width="1" height="1"/><rect x="20" y="6" width="1" height="1"/><rect x="24" y="6" width="1" height="1"/><rect x="20" y="7" width="1" height="1"/><rect x="24" y="7" width="1" height="1"/><rect x="21" y="8" width="3" height="1"/></svg>
<svg class="a" style="left:52px;top:439px" width="26" height="9" shape-rendering="crispEdges" fill="#000"><rect x="1" y="5" width="3" height="1"/><rect x="8" y="0" width="1" height="1"/><rect x="7" y="1" width="2" height="1"/><rect x="6" y="2" width="1" height="1"/><rect x="8" y="2" width="1" height="1"/><rect x="8" y="3" width="1" height="1"/><rect x="8" y="4" width="1" height="1"/><rect x="8" y="5" width="1" height="1"/><rect x="8" y="6" width="1" height="1"/><rect x="8" y="7" width="1" height="1"/><rect x="8" y="8" width="1" height="1"/><rect x="15" y="0" width="1" height="1"/><rect x="14" y="1" width="2" height="1"/><rect x="13" y="2" width="1" height="1"/><rect x="15" y="2" width="1" height="1"/><rect x="15" y="3" width="1" height="1"/><rect x="15" y="4" width="1" height="1"/><rect x="15" y="5" width="1" height="1"/><rect x="15" y="6" width="1" height="1"/><rect x="15" y="7" width="1" height="1"/><rect x="15" y="8" width="1" height="1"/><rect x="21" y="0" width="3" height="1"/><rect x="20" y="1" width="1" height="1"/><rect x="24" y="1" width="1" height="1"/><rect x="20" y="2" width="1" height="1"/><rect x="24" y="2" width="1" height="1"/><rect x="20" y="3" width="1" height="1"/><rect x="24" y="3" width="1" height="1"/><rect x="20" y="4" width="1" height="1"/><rect x="24" y="4" width="1" height="1"/><rect x="20" y="5" width="1" height="1"/><rect x="24" y="5" width="1" height="1"/><rect x="20" y="6" width="1" height="1"/><rect x="24" y="6" width="1" height="1"/><rect x="20" y="7" width="1" height="1"/><rect x="24" y="7" width="1" height="1"/><rect x="21" y="8" width="3" height="1"/></svg>
<div class="t" style="left:11px;top:300px;font-weight:bold;font-size:14px;transform:rotate(-90deg);transform-origin:0 0">[dB]</div>
<svg class="a" style="left:127px;top:451px" width="10" height="7" shape-rendering="crispEdges" fill="#000"><rect x="1" y="0" width="2" height="1"/><rect x="0" y="1" width="1" height="1"/><rect x="3" y="1" width="1" height="1"/><rect x="0" y="2" width="3" height="1"/><rect x="0" y="3" width="1" height="1"/><rect x="3" y="3" width="1" height="1"/><rect x="0" y="4" width="1" height="1"/><rect x="3" y="4" width="1" height="1"/><rect x="0" y="5" width="1" height="1"/><rect x="3" y="5" width="1" height="1"/><rect x="1" y="6" width="2" height="1"/><rect x="6" y="0" width="2" height="1"/><rect x="5" y="1" width="1" height="1"/><rect x="8" y="1" width="1" height="1"/><rect x="5" y="2" width="1" height="1"/><rect x="8" y="2" width="1" height="1"/><rect x="5" y="3" width="1" height="1"/><rect x="8" y="3" width="1" height="1"/><rect x="5" y="4" width="1" height="1"/><rect x="8" y="4" width="1" height="1"/><rect x="5" y="5" width="1" height="1"/><rect x="8" y="5" width="1" height="1"/><rect x="6" y="6" width="2" height="1"/></svg>
<svg class="a" style="left:158px;top:451px" width="10" height="7" shape-rendering="crispEdges" fill="#000"><rect x="1" y="0" width="2" height="1"/><rect x="0" y="1" width="1" height="1"/><rect x="3" y="1" width="1" height="1"/><rect x="0" y="2" width="1" height="1"/><rect x="3" y="2" width="1" height="1"/><rect x="1" y="3" width="2" height="1"/><rect x="0" y="4" width="1" height="1"/><rect x="3" y="4" width="1" height="1"/><rect x="0" y="5" width="1" height="1"/><rect x="3" y="5" width="1" height="1"/><rect x="1" y="6" width="2" height="1"/><rect x="6" y="0" width="2" height="1"/><rect x="5" y="1" width="1" height="1"/><rect x="8" y="1" width="1" height="1"/><rect x="5" y="2" width="1" height="1"/><rect x="8" y="2" width="1" height="1"/><rect x="5" y="3" width="1" height="1"/><rect x="8" y="3" width="1" height="1"/><rect x="5" y="4" width="1" height="1"/><rect x="8" y="4" width="1" height="1"/><rect x="5" y="5" width="1" height="1"/><rect x="8" y="5" width="1" height="1"/><rect x="6" y="6" width="2" height="1"/></svg>
<svg class="a" style="left:253px;top:451px" width="15" height="7" shape-rendering="crispEdges" fill="#000"><rect x="1" y="0" width="2" height="1"/><rect x="0" y="1" width="1" height="1"/><rect x="3" y="1" width="1" height="1"/><rect x="3" y="2" width="1" height="1"/><rect x="2" y="3" width="1" height="1"/><rect x="1" y="4" width="1" height="1"/><rect x="0" y="5" width="1" height="1"/><rect x="0" y="6" width="4" height="1"/><rect x="6" y="0" width="2" height="1"/><rect x="5" y="1" width="1" height="1"/><rect x="8" y="1" width="1" height="1"/><rect x="5" y="2" width="1" height="1"/><rect x="8" y="2" width="1" height="1"/><rect x="5" y="3" width="1" height="1"/><rect x="8" y="3" width="1" height="1"/><rect x="5" y="4" width="1" height="1"/><rect x="8" y="4" width="1" height="1"/><rect x="5" y="5" width="1" height="1"/><rect x="8" y="5" width="1" height="1"/><rect x="6" y="6" width="2" height="1"/><rect x="11" y="0" width="2" height="1"/><rect x="10" y="1" width="1" height="1"/><rect x="13" y="1" width="1" height="1"/><rect x="10" y="2" width="1" height="1"/><rect x="13" y="2" width="1" height="1"/><rect x="10" y="3" width="1" height="1"/><rect x="13" y="3" width="1" height="1"/><rect x="10" y="4" width="1" height="1"/><rect x="13" y="4" width="1" height="1"/><rect x="10" y="5" width="1" height="1"/><rect x="13" y="5" width="1" height="1"/><rect x="11" y="6" width="2" height="1"/></svg>
<svg class="a" style="left:326px;top:451px" width="15" height="7" shape-rendering="crispEdges" fill="#000"><rect x="3" y="0" width="1" height="1"/><rect x="2" y="1" width="2" height="1"/><rect x="1" y="2" width="1" height="1"/><rect x="3" y="2" width="1" height="1"/><rect x="0" y="3" width="1" height="1"/><rect x="3" y="3" width="1" height="1"/><rect x="0" y="4" width="5" height="1"/><rect x="3" y="5" width="1" height="1"/><rect x="3" y="6" width="1" height="1"/><rect x="6" y="0" width="2" height="1"/><rect x="5" y="1" width="1" height="1"/><rect x="8" y="1" width="1" height="1"/><rect x="5" y="2" width="1" height="1"/><rect x="8" y="2" width="1" height="1"/><rect x="5" y="3" width="1" height="1"/><rect x="8" y="3" width="1" height="1"/><rect x="5" y="4" width="1" height="1"/><rect x="8" y="4" width="1" height="1"/><rect x="5" y="5" width="1" height="1"/><rect x="8" y="5" width="1" height="1"/><rect x="6" y="6" width="2" height="1"/><rect x="11" y="0" width="2" height="1"/><rect x="10" y="1" width="1" height="1"/><rect x="13" y="1" width="1" height="1"/><rect x="10" y="2" width="1" height="1"/><rect x="13" y="2" width="1" height="1"/><rect x="10" y="3" width="1" height="1"/><rect x="13" y="3" width="1" height="1"/><rect x="10" y="4" width="1" height="1"/><rect x="13" y="4" width="1" height="1"/><rect x="10" y="5" width="1" height="1"/><rect x="13" y="5" width="1" height="1"/><rect x="11" y="6" width="2" height="1"/></svg>
<svg class="a" style="left:369px;top:451px" width="15" height="7" shape-rendering="crispEdges" fill="#000"><rect x="1" y="0" width="2" height="1"/><rect x="0" y="1" width="1" height="1"/><rect x="3" y="1" width="1" height="1"/><rect x="0" y="2" width="3" height="1"/><rect x="0" y="3" width="1" height="1"/><rect x="3" y="3" width="1" height="1"/><rect x="0" y="4" width="1" height="1"/><rect x="3" y="4" width="1" height="1"/><rect x="0" y="5" width="1" height="1"/><rect x="3" y="5" width="1" height="1"/><rect x="1" y="6" width="2" height="1"/><rect x="6" y="0" width="2" height="1"/><rect x="5" y="1" width="1" height="1"/><rect x="8" y="1" width="1" height="1"/><rect x="5" y="2" width="1" height="1"/><rect x="8" y="2" width="1" height="1"/><rect x="5" y="3" width="1" height="1"/><rect x="8" y="3" width="1" height="1"/><rect x="5" y="4" width="1" height="1"/><rect x="8" y="4" width="1" height="1"/><rect x="5" y="5" width="1" height="1"/><rect x="8" y="5" width="1" height="1"/><rect x="6" y="6" width="2" height="1"/><rect x="11" y="0" width="2" height="1"/><rect x="10" y="1" width="1" height="1"/><rect x="13" y="1" width="1" height="1"/><rect x="10" y="2" width="1" height="1"/><rect x="13" y="2" width="1" height="1"/><rect x="10" y="3" width="1" height="1"/><rect x="13" y="3" width="1" height="1"/><rect x="10" y="4" width="1" height="1"/><rect x="13" y="4" width="1" height="1"/><rect x="10" y="5" width="1" height="1"/><rect x="13" y="5" width="1" height="1"/><rect x="11" y="6" width="2" height="1"/></svg>
<svg class="a" style="left:400px;top:451px" width="15" height="7" shape-rendering="crispEdges" fill="#000"><rect x="1" y="0" width="2" height="1"/><rect x="0" y="1" width="1" height="1"/><rect x="3" y="1" width="1" height="1"/><rect x="0" y="2" width="1" height="1"/><rect x="3" y="2" width="1" height="1"/><rect x="1" y="3" width="2" height="1"/><rect x="0" y="4" width="1" height="1"/><rect x="3" y="4" width="1" height="1"/><rect x="0" y="5" width="1" height="1"/><rect x="3" y="5" width="1" height="1"/><rect x="1" y="6" width="2" height="1"/><rect x="6" y="0" width="2" height="1"/><rect x="5" y="1" width="1" height="1"/><rect x="8" y="1" width="1" height="1"/><rect x="5" y="2" width="1" height="1"/><rect x="8" y="2" width="1" height="1"/><rect x="5" y="3" width="1" height="1"/><rect x="8" y="3" width="1" height="1"/><rect x="5" y="4" width="1" height="1"/><rect x="8" y="4" width="1" height="1"/><rect x="5" y="5" width="1" height="1"/><rect x="8" y="5" width="1" height="1"/><rect x="6" y="6" width="2" height="1"/><rect x="11" y="0" width="2" height="1"/><rect x="10" y="1" width="1" height="1"/><rect x="13" y="1" width="1" height="1"/><rect x="10" y="2" width="1" height="1"/><rect x="13" y="2" width="1" height="1"/><rect x="10" y="3" width="1" height="1"/><rect x="13" y="3" width="1" height="1"/><rect x="10" y="4" width="1" height="1"/><rect x="13" y="4" width="1" height="1"/><rect x="10" y="5" width="1" height="1"/><rect x="13" y="5" width="1" height="1"/><rect x="11" y="6" width="2" height="1"/></svg>
<svg class="a" style="left:500px;top:451px" width="10" height="7" shape-rendering="crispEdges" fill="#000"><rect x="1" y="0" width="2" height="1"/><rect x="0" y="1" width="1" height="1"/><rect x="3" y="1" width="1" height="1"/><rect x="3" y="2" width="1" height="1"/><rect x="2" y="3" width="1" height="1"/><rect x="1" y="4" width="1" height="1"/><rect x="0" y="5" width="1" height="1"/><rect x="0" y="6" width="4" height="1"/><rect x="5" y="0" width="1" height="1"/><rect x="5" y="1" width="1" height="1"/><rect x="5" y="2" width="1" height="1"/><rect x="8" y="2" width="1" height="1"/><rect x="5" y="3" width="1" height="1"/><rect x="7" y="3" width="1" height="1"/><rect x="5" y="4" width="2" height="1"/><rect x="5" y="5" width="1" height="1"/><rect x="7" y="5" width="1" height="1"/><rect x="5" y="6" width="1" height="1"/><rect x="8" y="6" width="1" height="1"/></svg>
<svg class="a" style="left:573px;top:451px" width="10" height="7" shape-rendering="crispEdges" fill="#000"><rect x="3" y="0" width="1" height="1"/><rect x="2" y="1" width="2" height="1"/><rect x="1" y="2" width="1" height="1"/><rect x="3" y="2" width="1" height="1"/><rect x="0" y="3" width="1" height="1"/><rect x="3" y="3" width="1" height="1"/><rect x="0" y="4" width="5" height="1"/><rect x="3" y="5" width="1" height="1"/><rect x="3" y="6" width="1" height="1"/><rect x="5" y="0" width="1" height="1"/><rect x="5" y="1" width="1" height="1"/><rect x="5" y="2" width="1" height="1"/><rect x="8" y="2" width="1" height="1"/><rect x="5" y="3" width="1" height="1"/><rect x="7" y="3" width="1" height="1"/><rect x="5" y="4" width="2" height="1"/><rect x="5" y="5" width="1" height="1"/><rect x="7" y="5" width="1" height="1"/><rect x="5" y="6" width="1" height="1"/><rect x="8" y="6" width="1" height="1"/></svg>
<svg class="a" style="left:616px;top:451px" width="10" height="7" shape-rendering="crispEdges" fill="#000"><rect x="1" y="0" width="2" height="1"/><rect x="0" y="1" width="1" height="1"/><rect x="3" y="1" width="1" height="1"/><rect x="0" y="2" width="3" height="1"/><rect x="0" y="3" width="1" height="1"/><rect x="3" y="3" width="1" height="1"/><rect x="0" y="4" width="1" height="1"/><rect x="3" y="4" width="1" height="1"/><rect x="0" y="5" width="1" height="1"/><rect x="3" y="5" width="1" height="1"/><rect x="1" y="6" width="2" height="1"/><rect x="5" y="0" width="1" height="1"/><rect x="5" y="1" width="1" height="1"/><rect x="5" y="2" width="1" height="1"/><rect x="8" y="2" width="1" height="1"/><rect x="5" y="3" width="1" height="1"/><rect x="7" y="3" width="1" height="1"/><rect x="5" y="4" width="2" height="1"/><rect x="5" y="5" width="1" height="1"/><rect x="7" y="5" width="1" height="1"/><rect x="5" y="6" width="1" height="1"/><rect x="8" y="6" width="1" height="1"/></svg>
<svg class="a" style="left:647px;top:451px" width="10" height="7" shape-rendering="crispEdges" fill="#000"><rect x="1" y="0" width="2" height="1"/><rect x="0" y="1" width="1" height="1"/><rect x="3" y="1" width="1" height="1"/><rect x="0" y="2" width="1" height="1"/><rect x="3" y="2" width="1" height="1"/><rect x="1" y="3" width="2" height="1"/><rect x="0" y="4" width="1" height="1"/><rect x="3" y="4" width="1" height="1"/><rect x="0" y="5" width="1" height="1"/><rect x="3" y="5" width="1" height="1"/><rect x="1" y="6" width="2" height="1"/><rect x="5" y="0" width="1" height="1"/><rect x="5" y="1" width="1" height="1"/><rect x="5" y="2" width="1" height="1"/><rect x="8" y="2" width="1" height="1"/><rect x="5" y="3" width="1" height="1"/><rect x="7" y="3" width="1" height="1"/><rect x="5" y="4" width="2" height="1"/><rect x="5" y="5" width="1" height="1"/><rect x="7" y="5" width="1" height="1"/><rect x="5" y="6" width="1" height="1"/><rect x="8" y="6" width="1" height="1"/></svg>
<svg class="a" style="left:742px;top:451px" width="15" height="7" shape-rendering="crispEdges" fill="#000"><rect x="1" y="0" width="2" height="1"/><rect x="0" y="1" width="1" height="1"/><rect x="3" y="1" width="1" height="1"/><rect x="3" y="2" width="1" height="1"/><rect x="2" y="3" width="1" height="1"/><rect x="1" y="4" width="1" height="1"/><rect x="0" y="5" width="1" height="1"/><rect x="0" y="6" width="4" height="1"/><rect x="6" y="0" width="2" height="1"/><rect x="5" y="1" width="1" height="1"/><rect x="8" y="1" width="1" height="1"/><rect x="5" y="2" width="1" height="1"/><rect x="8" y="2" width="1" height="1"/><rect x="5" y="3" width="1" height="1"/><rect x="8" y="3" width="1" height="1"/><rect x="5" y="4" width="1" height="1"/><rect x="8" y="4" width="1" height="1"/><rect x="5" y="5" width="1" height="1"/><rect x="8" y="5" width="1" height="1"/><rect x="6" y="6" width="2" height="1"/><rect x="10" y="0" width="1" height="1"/><rect x="10" y="1" width="1" height="1"/><rect x="10" y="2" width="1" height="1"/><rect x="13" y="2" width="1" height="1"/><rect x="10" y="3" width="1" height="1"/><rect x="12" y="3" width="1" height="1"/><rect x="10" y="4" width="2" height="1"/><rect x="10" y="5" width="1" height="1"/><rect x="12" y="5" width="1" height="1"/><rect x="10" y="6" width="1" height="1"/><rect x="13" y="6" width="1" height="1"/></svg>
<svg class="a" style="left:176px;top:460px" width="21" height="9" shape-rendering="crispEdges" fill="#000"><rect x="3" y="0" width="1" height="1"/><rect x="2" y="1" width="2" height="1"/><rect x="1" y="2" width="1" height="1"/><rect x="3" y="2" width="1" height="1"/><rect x="3" y="3" width="1" height="1"/><rect x="3" y="4" width="1" height="1"/><rect x="3" y="5" width="1" height="1"/><rect x="3" y="6" width="1" height="1"/><rect x="3" y="7" width="1" height="1"/><rect x="3" y="8" width="1" height="1"/><rect x="9" y="0" width="3" height="1"/><rect x="8" y="1" width="1" height="1"/><rect x="12" y="1" width="1" height="1"/><rect x="8" y="2" width="1" height="1"/><rect x="12" y="2" width="1" height="1"/><rect x="8" y="3" width="1" height="1"/><rect x="12" y="3" width="1" height="1"/><rect x="8" y="4" width="1" height="1"/><rect x="12" y="4" width="1" height="1"/><rect x="8" y="5" width="1" height="1"/><rect x="12" y="5" width="1" height="1"/><rect x="8" y="6" width="1" height="1"/><rect x="12" y="6" width="1" height="1"/><rect x="8" y="7" width="1" height="1"/><rect x="12" y="7" width="1" height="1"/><rect x="9" y="8" width="3" height="1"/><rect x="16" y="0" width="3" height="1"/><rect x="15" y="1" width="1" height="1"/><rect x="19" y="1" width="1" height="1"/><rect x="15" y="2" width="1" height="1"/><rect x="19" y="2" width="1" height="1"/><rect x="15" y="3" width="1" height="1"/><rect x="19" y="3" width="1" height="1"/><rect x="15" y="4" width="1" height="1"/><rect x="19" y="4" width="1" height="1"/><rect x="15" y="5" width="1" height="1"/><rect x="19" y="5" width="1" height="1"/><rect x="15" y="6" width="1" height="1"/><rect x="19" y="6" width="1" height="1"/><rect x="15" y="7" width="1" height="1"/><rect x="19" y="7" width="1" height="1"/><rect x="16" y="8" width="3" height="1"/></svg>
<svg class="a" style="left:424px;top:460px" width="14" height="9" shape-rendering="crispEdges" fill="#000"><rect x="3" y="0" width="1" height="1"/><rect x="2" y="1" width="2" height="1"/><rect x="1" y="2" width="1" height="1"/><rect x="3" y="2" width="1" height="1"/><rect x="3" y="3" width="1" height="1"/><rect x="3" y="4" width="1" height="1"/><rect x="3" y="5" width="1" height="1"/><rect x="3" y="6" width="1" height="1"/><rect x="3" y="7" width="1" height="1"/><rect x="3" y="8" width="1" height="1"/><rect x="8" y="0" width="1" height="1"/><rect x="8" y="1" width="1" height="1"/><rect x="8" y="2" width="1" height="1"/><rect x="12" y="2" width="1" height="1"/><rect x="8" y="3" width="1" height="1"/><rect x="11" y="3" width="1" height="1"/><rect x="8" y="4" width="1" height="1"/><rect x="10" y="4" width="1" height="1"/><rect x="8" y="5" width="2" height="1"/><rect x="8" y="6" width="1" height="1"/><rect x="10" y="6" width="1" height="1"/><rect x="8" y="7" width="1" height="1"/><rect x="11" y="7" width="1" height="1"/><rect x="8" y="8" width="1" height="1"/><rect x="12" y="8" width="1" height="1"/></svg>
<svg class="a" style="left:666px;top:460px" width="21" height="9" shape-rendering="crispEdges" fill="#000"><rect x="3" y="0" width="1" height="1"/><rect x="2" y="1" width="2" height="1"/><rect x="1" y="2" width="1" height="1"/><rect x="3" y="2" width="1" height="1"/><rect x="3" y="3" width="1" height="1"/><rect x="3" y="4" width="1" height="1"/><rect x="3" y="5" width="1" height="1"/><rect x="3" y="6" width="1" height="1"/><rect x="3" y="7" width="1" height="1"/><rect x="3" y="8" width="1" height="1"/><rect x="9" y="0" width="3" height="1"/><rect x="8" y="1" width="1" height="1"/><rect x="12" y="1" width="1" height="1"/><rect x="8" y="2" width="1" height="1"/><rect x="12" y="2" width="1" height="1"/><rect x="8" y="3" width="1" height="1"/><rect x="12" y="3" width="1" height="1"/><rect x="8" y="4" width="1" height="1"/><rect x="12" y="4" width="1" height="1"/><rect x="8" y="5" width="1" height="1"/><rect x="12" y="5" width="1" height="1"/><rect x="8" y="6" width="1" height="1"/><rect x="12" y="6" width="1" height="1"/><rect x="8" y="7" width="1" height="1"/><rect x="12" y="7" width="1" height="1"/><rect x="9" y="8" width="3" height="1"/><rect x="15" y="0" width="1" height="1"/><rect x="15" y="1" width="1" height="1"/><rect x="15" y="2" width="1" height="1"/><rect x="19" y="2" width="1" height="1"/><rect x="15" y="3" width="1" height="1"/><rect x="18" y="3" width="1" height="1"/><rect x="15" y="4" width="1" height="1"/><rect x="17" y="4" width="1" height="1"/><rect x="15" y="5" width="2" height="1"/><rect x="15" y="6" width="1" height="1"/><rect x="17" y="6" width="1" height="1"/><rect x="15" y="7" width="1" height="1"/><rect x="18" y="7" width="1" height="1"/><rect x="15" y="8" width="1" height="1"/><rect x="19" y="8" width="1" height="1"/></svg>
<div class="t" style="left:383px;top:474px;font-weight:bold;font-size:13px">frequency [Hz]</div>
<svg class="a" style="left:8px;top:466px" width="73" height="38" shape-rendering="crispEdges"><rect width="73" height="38" fill="#fff"/><rect x="1" y="17" width="3" height="7" fill="#FF3535"/><rect x="4" y="15" width="2" height="12" fill="#FF3535"/><rect x="6" y="19" width="2" height="7" fill="#FF3535"/><rect x="8" y="17" width="2" height="8" fill="#FF3535"/><rect x="10" y="14" width="3" height="13" fill="#FF3535"/><rect x="13" y="12" width="3" height="8" fill="#FF3535"/><rect x="16" y="10" width="2" height="8" fill="#FF3535"/><rect x="18" y="8" width="2" height="13" fill="#FF3535"/><rect x="20" y="12" width="4" height="14" fill="#FF3535"/><rect x="24" y="12" width="3" height="8" fill="#FF3535"/><rect x="27" y="10" width="3" height="13" fill="#FF3535"/><rect x="30" y="11" width="4" height="11" fill="#FF3535"/><rect x="34" y="10" width="3" height="12" fill="#FF3535"/><rect x="37" y="7" width="2" height="13" fill="#FF3535"/><rect x="39" y="5" width="3" height="15" fill="#FF3535"/><rect x="42" y="2" width="3" height="12" fill="#FF3535"/><rect x="45" y="6" width="3" height="13" fill="#FF3535"/><rect x="48" y="9" width="3" height="7" fill="#FF3535"/><rect x="51" y="12" width="4" height="7" fill="#FF3535"/><rect x="55" y="13" width="3" height="12" fill="#FF3535"/><rect x="58" y="9" width="2" height="12" fill="#FF3535"/><rect x="60" y="11" width="3" height="8" fill="#FF3535"/><rect x="63" y="13" width="3" height="8" fill="#FF3535"/><rect x="66" y="12" width="2" height="12" fill="#FF3535"/><rect x="68" y="15" width="3" height="6" fill="#FF3535"/><rect x="71" y="16" width="2" height="7" fill="#FF3535"/><rect x="5" y="17" width="1" height="5" fill="#FF7A30"/><rect x="14" y="14" width="1" height="5" fill="#FF7A30"/><rect x="19" y="10" width="1" height="5" fill="#FF7A30"/><rect x="28" y="12" width="1" height="5" fill="#FF7A30"/><rect x="38" y="9" width="1" height="5" fill="#FF7A30"/><rect x="45" y="8" width="1" height="5" fill="#FF7A30"/><rect x="54" y="14" width="1" height="5" fill="#FF7A30"/><rect x="62" y="13" width="1" height="5" fill="#FF7A30"/><rect x="1" y="28" width="1" height="1" fill="#000"/><rect x="2" y="28" width="1" height="1" fill="#000"/><rect x="3" y="28" width="1" height="1" fill="#000"/><rect x="4" y="28" width="1" height="1" fill="#000"/><rect x="1" y="29" width="1" height="1" fill="#000"/><rect x="5" y="29" width="1" height="1" fill="#000"/><rect x="1" y="30" width="1" height="1" fill="#000"/><rect x="5" y="30" width="1" height="1" fill="#000"/><rect x="1" y="31" width="1" height="1" fill="#000"/><rect x="5" y="31" width="1" height="1" fill="#000"/><rect x="1" y="32" width="1" height="1" fill="#000"/><rect x="5" y="32" width="1" height="1" fill="#000"/><rect x="1" y="33" width="1" height="1" fill="#000"/><rect x="5" y="33" width="1" height="1" fill="#000"/><rect x="1" y="34" width="1" height="1" fill="#000"/><rect x="2" y="34" width="1" height="1" fill="#000"/><rect x="3" y="34" width="1" height="1" fill="#000"/><rect x="4" y="34" width="1" height="1" fill="#000"/><rect x="7" y="30" width="1" height="1" fill="#000"/><rect x="9" y="30" width="1" height="1" fill="#000"/><rect x="10" y="30" width="1" height="1" fill="#000"/><rect x="7" y="31" width="1" height="1" fill="#000"/><rect x="8" y="31" width="1" height="1" fill="#000"/><rect x="7" y="32" width="1" height="1" fill="#000"/><rect x="7" y="33" width="1" height="1" fill="#000"/><rect x="7" y="34" width="1" height="1" fill="#000"/><rect x="10" y="32" width="1" height="1" fill="#000"/><rect x="11" y="32" width="1" height="1" fill="#000"/><rect x="16" y="28" width="1" height="1" fill="#000"/><rect x="16" y="29" width="1" height="1" fill="#000"/><rect x="16" y="30" width="1" height="1" fill="#000"/><rect x="16" y="31" width="1" height="1" fill="#000"/><rect x="16" y="32" width="1" height="1" fill="#000"/><rect x="13" y="33" width="1" height="1" fill="#000"/><rect x="16" y="33" width="1" height="1" fill="#000"/><rect x="14" y="34" width="1" height="1" fill="#000"/><rect x="15" y="34" width="1" height="1" fill="#000"/><rect x="19" y="30" width="1" height="1" fill="#000"/><rect x="20" y="30" width="1" height="1" fill="#000"/><rect x="18" y="31" width="1" height="1" fill="#000"/><rect x="21" y="31" width="1" height="1" fill="#000"/><rect x="18" y="32" width="1" height="1" fill="#000"/><rect x="21" y="32" width="1" height="1" fill="#000"/><rect x="18" y="33" width="1" height="1" fill="#000"/><rect x="21" y="33" width="1" height="1" fill="#000"/><rect x="19" y="34" width="1" height="1" fill="#000"/><rect x="20" y="34" width="1" height="1" fill="#000"/><rect x="24" y="30" width="1" height="1" fill="#000"/><rect x="26" y="30" width="1" height="1" fill="#000"/><rect x="27" y="30" width="1" height="1" fill="#000"/><rect x="24" y="31" width="1" height="1" fill="#000"/><rect x="25" y="31" width="1" height="1" fill="#000"/><rect x="24" y="32" width="1" height="1" fill="#000"/><rect x="24" y="33" width="1" height="1" fill="#000"/><rect x="24" y="34" width="1" height="1" fill="#000"/><rect x="30" y="28" width="1" height="1" fill="#000"/><rect x="30" y="29" width="1" height="1" fill="#000"/><rect x="28" y="30" width="1" height="1" fill="#000"/><rect x="29" y="30" width="1" height="1" fill="#000"/><rect x="30" y="30" width="1" height="1" fill="#000"/><rect x="27" y="31" width="1" height="1" fill="#000"/><rect x="30" y="31" width="1" height="1" fill="#000"/><rect x="27" y="32" width="1" height="1" fill="#000"/><rect x="30" y="32" width="1" height="1" fill="#000"/><rect x="27" y="33" width="1" height="1" fill="#000"/><rect x="30" y="33" width="1" height="1" fill="#000"/><rect x="28" y="34" width="1" height="1" fill="#000"/><rect x="29" y="34" width="1" height="1" fill="#000"/><rect x="30" y="34" width="1" height="1" fill="#000"/><rect x="32" y="30" width="1" height="1" fill="#000"/><rect x="33" y="30" width="1" height="1" fill="#000"/><rect x="34" y="31" width="1" height="1" fill="#000"/><rect x="32" y="32" width="1" height="1" fill="#000"/><rect x="33" y="32" width="1" height="1" fill="#000"/><rect x="34" y="32" width="1" height="1" fill="#000"/><rect x="31" y="33" width="1" height="1" fill="#000"/><rect x="34" y="33" width="1" height="1" fill="#000"/><rect x="32" y="34" width="1" height="1" fill="#000"/><rect x="33" y="34" width="1" height="1" fill="#000"/><rect x="34" y="34" width="1" height="1" fill="#000"/><rect x="36" y="30" width="1" height="1" fill="#000"/><rect x="37" y="30" width="1" height="1" fill="#000"/><rect x="38" y="30" width="1" height="1" fill="#000"/><rect x="36" y="31" width="1" height="1" fill="#000"/><rect x="39" y="31" width="1" height="1" fill="#000"/><rect x="36" y="32" width="1" height="1" fill="#000"/><rect x="39" y="32" width="1" height="1" fill="#000"/><rect x="36" y="33" width="1" height="1" fill="#000"/><rect x="39" y="33" width="1" height="1" fill="#000"/><rect x="36" y="34" width="1" height="1" fill="#000"/><rect x="39" y="34" width="1" height="1" fill="#000"/><rect x="41" y="32" width="1" height="1" fill="#000"/><rect x="42" y="32" width="1" height="1" fill="#000"/><rect x="45" y="28" width="1" height="1" fill="#000"/><rect x="46" y="28" width="1" height="1" fill="#000"/><rect x="47" y="28" width="1" height="1" fill="#000"/><rect x="48" y="28" width="1" height="1" fill="#000"/><rect x="45" y="29" width="1" height="1" fill="#000"/><rect x="49" y="29" width="1" height="1" fill="#000"/><rect x="45" y="30" width="1" height="1" fill="#000"/><rect x="49" y="30" width="1" height="1" fill="#000"/><rect x="45" y="31" width="1" height="1" fill="#000"/><rect x="49" y="31" width="1" height="1" fill="#000"/><rect x="45" y="32" width="1" height="1" fill="#000"/><rect x="49" y="32" width="1" height="1" fill="#000"/><rect x="45" y="33" width="1" height="1" fill="#000"/><rect x="49" y="33" width="1" height="1" fill="#000"/><rect x="45" y="34" width="1" height="1" fill="#000"/><rect x="46" y="34" width="1" height="1" fill="#000"/><rect x="47" y="34" width="1" height="1" fill="#000"/><rect x="48" y="34" width="1" height="1" fill="#000"/><rect x="52" y="30" width="1" height="1" fill="#000"/><rect x="53" y="30" width="1" height="1" fill="#000"/><rect x="51" y="31" width="1" height="1" fill="#000"/><rect x="54" y="31" width="1" height="1" fill="#000"/><rect x="51" y="32" width="1" height="1" fill="#000"/><rect x="52" y="32" width="1" height="1" fill="#000"/><rect x="53" y="32" width="1" height="1" fill="#000"/><rect x="54" y="32" width="1" height="1" fill="#000"/><rect x="51" y="33" width="1" height="1" fill="#000"/><rect x="52" y="34" width="1" height="1" fill="#000"/><rect x="53" y="34" width="1" height="1" fill="#000"/><rect x="54" y="34" width="1" height="1" fill="#000"/><rect x="57" y="30" width="1" height="1" fill="#000"/><rect x="58" y="30" width="1" height="1" fill="#000"/><rect x="56" y="31" width="1" height="1" fill="#000"/><rect x="57" y="32" width="1" height="1" fill="#000"/><rect x="58" y="33" width="1" height="1" fill="#000"/><rect x="56" y="34" width="1" height="1" fill="#000"/><rect x="57" y="34" width="1" height="1" fill="#000"/><rect x="61" y="28" width="1" height="1" fill="#000"/><rect x="61" y="30" width="1" height="1" fill="#000"/><rect x="61" y="31" width="1" height="1" fill="#000"/><rect x="61" y="32" width="1" height="1" fill="#000"/><rect x="61" y="33" width="1" height="1" fill="#000"/><rect x="61" y="34" width="1" height="1" fill="#000"/><rect x="64" y="30" width="1" height="1" fill="#000"/><rect x="65" y="30" width="1" height="1" fill="#000"/><rect x="66" y="30" width="1" height="1" fill="#000"/><rect x="63" y="31" width="1" height="1" fill="#000"/><rect x="66" y="31" width="1" height="1" fill="#000"/><rect x="63" y="32" width="1" height="1" fill="#000"/><rect x="66" y="32" width="1" height="1" fill="#000"/><rect x="63" y="33" width="1" height="1" fill="#000"/><rect x="66" y="33" width="1" height="1" fill="#000"/><rect x="64" y="34" width="1" height="1" fill="#000"/><rect x="65" y="34" width="1" height="1" fill="#000"/><rect x="66" y="34" width="1" height="1" fill="#000"/><rect x="66" y="35" width="1" height="1" fill="#000"/><rect x="63" y="36" width="1" height="1" fill="#000"/><rect x="64" y="36" width="1" height="1" fill="#000"/><rect x="65" y="36" width="1" height="1" fill="#000"/><rect x="68" y="30" width="1" height="1" fill="#000"/><rect x="69" y="30" width="1" height="1" fill="#000"/><rect x="70" y="30" width="1" height="1" fill="#000"/><rect x="68" y="31" width="1" height="1" fill="#000"/><rect x="71" y="31" width="1" height="1" fill="#000"/><rect x="68" y="32" width="1" height="1" fill="#000"/><rect x="71" y="32" width="1" height="1" fill="#000"/><rect x="68" y="33" width="1" height="1" fill="#000"/><rect x="71" y="33" width="1" height="1" fill="#000"/><rect x="68" y="34" width="1" height="1" fill="#000"/><rect x="71" y="34" width="1" height="1" fill="#000"/></svg>
<div class="a" style="left:97px;top:86px;width:210px;height:250px;background:#7A8EE2;border-radius:2px 2px 0 0;box-shadow:inset 1px 0 0 #6073D6,inset -1px 0 0 #4F62CC,inset 0 -1px 0 #4F62CC,inset -2px 0 0 #6A7DDA,inset 0 -2px 0 #6A7DDA"></div><div class="a" style="left:98px;top:86px;width:207px;height:22px;background:linear-gradient(#A4B6F2 0px,#90A6EE 2px,#7E94E6 6px,#7A90E4 14px,#768BE0 22px)"></div><div class="t" style="left:101px;top:94px;font-weight:bold;font-size:11px;letter-spacing:0.4px;color:#F4F6FE">Measurement V:1 Curve:1</div><div class="a" style="left:288px;top:92px;width:13px;height:13px;border:1px solid #D8DEF6;border-radius:2px;background:#B46676"><svg class="a" style="left:0;top:0" width="11" height="11"><path d="M2.5 2.5 L8.5 8.5 M8.5 2.5 L2.5 8.5" stroke="#fff" stroke-width="2.5"/></svg></div><div class="a" style="left:101px;top:108px;width:202px;height:224px;background:#ECE9D8"></div><div class="a" style="left:112px;top:125px;width:188px;height:34px;border:1px solid #ACA899;box-shadow:inset 1px 1px 0 #fff,1px 1px 0 #fff"></div><div class="t" style="left:120px;top:121px;padding:0 1px 0 2px;background:#ECE9D8;font-size:11px;letter-spacing:-0.2px">cursor</div><div class="a" style="left:112px;top:166px;width:188px;height:40px;border:1px solid #ACA899;box-shadow:inset 1px 1px 0 #fff,1px 1px 0 #fff"></div><div class="t" style="left:120px;top:162px;padding:0 1px 0 2px;background:#ECE9D8;font-size:11px;letter-spacing:-0.2px">peak</div><div class="t" style="left:122px;top:134px;font-size:11px">frequency</div><div class="t" style="left:170px;width:100px;text-align:right;top:134px;font-size:11px">43.1Hz</div><div class="t" style="left:122px;top:147px;font-size:11px">level</div><div class="t" style="left:170px;width:100px;text-align:right;top:147px;font-size:11px">-115.8dB</div><div class="t" style="left:122px;top:177px;font-size:11px">frequency</div><div class="t" style="left:170px;width:100px;text-align:right;top:177px;font-size:11px">1981.1Hz</div><div class="t" style="left:122px;top:190px;font-size:11px">level</div><div class="t" style="left:170px;width:100px;text-align:right;top:190px;font-size:11px">-3.0dB</div><div class="t" style="left:112px;top:216px;font-size:11px;letter-spacing:-0.1px">in band level</div><div class="t" style="left:190px;width:100px;text-align:right;top:216px;font-size:11px">-1.1dB</div><div class="t" style="left:114px;top:236px;font-size:11px">THD+N</div><div class="t" style="left:150px;width:140px;text-align:right;top:236px;font-size:11px;letter-spacing:-0.35px">0.0037%=-88.70dB</div><div class="t" style="left:132px;top:298px;font-size:11px;letter-spacing:-0.25px">FFT progress</div><div class="a" style="left:113px;top:317px;width:188px;height:10px;border-top:1px solid #fff;border-left:1px solid #fff;border-right:1px solid #716F64;border-bottom:1px solid #716F64;box-shadow:inset -1px -1px 0 #ACA899"></div>
<div class="a" style="left:550px;top:86px;width:210px;height:190px;background:#7A8EE2;border-radius:2px 2px 0 0;box-shadow:inset 1px 0 0 #6073D6,inset -1px 0 0 #4F62CC,inset 0 -1px 0 #4F62CC,inset -2px 0 0 #6A7DDA,inset 0 -2px 0 #6A7DDA"></div><div class="a" style="left:551px;top:86px;width:207px;height:22px;background:linear-gradient(#A4B6F2 0px,#90A6EE 2px,#7E94E6 6px,#7A90E4 14px,#768BE0 22px)"></div><div class="t" style="left:554px;top:94px;font-weight:bold;font-size:11px;letter-spacing:0.4px;color:#F4F6FE">Measurement V:1 Curve:2</div><div class="a" style="left:741px;top:92px;width:13px;height:13px;border:1px solid #D8DEF6;border-radius:2px;background:#B46676"><svg class="a" style="left:0;top:0" width="11" height="11"><path d="M2.5 2.5 L8.5 8.5 M8.5 2.5 L2.5 8.5" stroke="#fff" stroke-width="2.5"/></svg></div><div class="a" style="left:554px;top:108px;width:202px;height:164px;background:#ECE9D8"></div><div class="a" style="left:565px;top:125px;width:188px;height:34px;border:1px solid #ACA899;box-shadow:inset 1px 1px 0 #fff,1px 1px 0 #fff"></div><div class="t" style="left:573px;top:121px;padding:0 1px 0 2px;background:#ECE9D8;font-size:11px;letter-spacing:-0.2px">cursor</div><div class="a" style="left:565px;top:166px;width:188px;height:40px;border:1px solid #ACA899;box-shadow:inset 1px 1px 0 #fff,1px 1px 0 #fff"></div><div class="t" style="left:573px;top:162px;padding:0 1px 0 2px;background:#ECE9D8;font-size:11px;letter-spacing:-0.2px">peak</div><div class="t" style="left:575px;top:134px;font-size:11px">frequency</div><div class="t" style="left:623px;width:100px;text-align:right;top:134px;font-size:11px">43.1Hz</div><div class="t" style="left:575px;top:147px;font-size:11px">level</div><div class="t" style="left:623px;width:100px;text-align:right;top:147px;font-size:11px">0.0000dB</div><div class="t" style="left:575px;top:177px;font-size:11px">frequency</div><div class="t" style="left:623px;width:100px;text-align:right;top:177px;font-size:11px">1981.1Hz</div><div class="t" style="left:575px;top:190px;font-size:11px">level</div><div class="t" style="left:623px;width:100px;text-align:right;top:190px;font-size:11px">-0.0dB</div><div class="t" style="left:565px;top:216px;font-size:11px;letter-spacing:-0.1px">in band level</div><div class="t" style="left:643px;width:100px;text-align:right;top:216px;font-size:11px">1.9dB</div>
<div class="t" style="left:8px;top:511px;font-size:11px">Ready</div>
<div class="a" style="left:476px;top:508px;width:42px;height:16px;border-top:1px solid #ACA899;border-left:1px solid #ACA899;border-right:1px solid #fff;border-bottom:1px solid #fff;padding:2px 1px 2px 1px;text-align:left;font-size:11px;line-height:1;white-space:nowrap;letter-spacing:-0.1px;will-change:transform">44100</div>
<div class="a" style="left:520px;top:508px;width:60px;height:16px;border-top:1px solid #ACA899;border-left:1px solid #ACA899;border-right:1px solid #fff;border-bottom:1px solid #fff;padding:2px 3px 2px 1px;text-align:center;font-size:11px;line-height:1;white-space:nowrap;letter-spacing:-0.2px;will-change:transform">1024</div>
<div class="a" style="left:582px;top:508px;width:42px;height:16px;border-top:1px solid #ACA899;border-left:1px solid #ACA899;border-right:1px solid #fff;border-bottom:1px solid #fff;padding:2px 1px 2px 1px;text-align:left;font-size:11px;line-height:1;white-space:nowrap;letter-spacing:-0.6px;will-change:transform">23ms</div>
<div class="a" style="left:626px;top:508px;width:28px;height:16px;border-top:1px solid #ACA899;border-left:1px solid #ACA899;border-right:1px solid #fff;border-bottom:1px solid #fff;padding:2px 1px 2px 1px;text-align:left;font-size:11px;line-height:1;white-space:nowrap;letter-spacing:0px;will-change:transform"></div>
<div class="a" style="left:655px;top:508px;width:88px;height:16px;border-top:1px solid #ACA899;border-left:1px solid #ACA899;border-right:1px solid #fff;border-bottom:1px solid #fff;padding:2px 1px 2px 1px;text-align:left;font-size:11px;line-height:1;white-space:nowrap;letter-spacing:-0.6px;will-change:transform">Blackman</div>
<svg class="a" style="left:749px;top:511px" width="13" height="13"><path d="M12 1 L1 12 M12 5 L5 12 M12 9 L9 12" stroke="#ACA899" stroke-width="1.5"/><path d="M12 2.5 L2.5 12 M12 6.5 L6.5 12 M12 10.5 L10.5 12" stroke="#fff" stroke-width="1"/></svg>
</body></html>
